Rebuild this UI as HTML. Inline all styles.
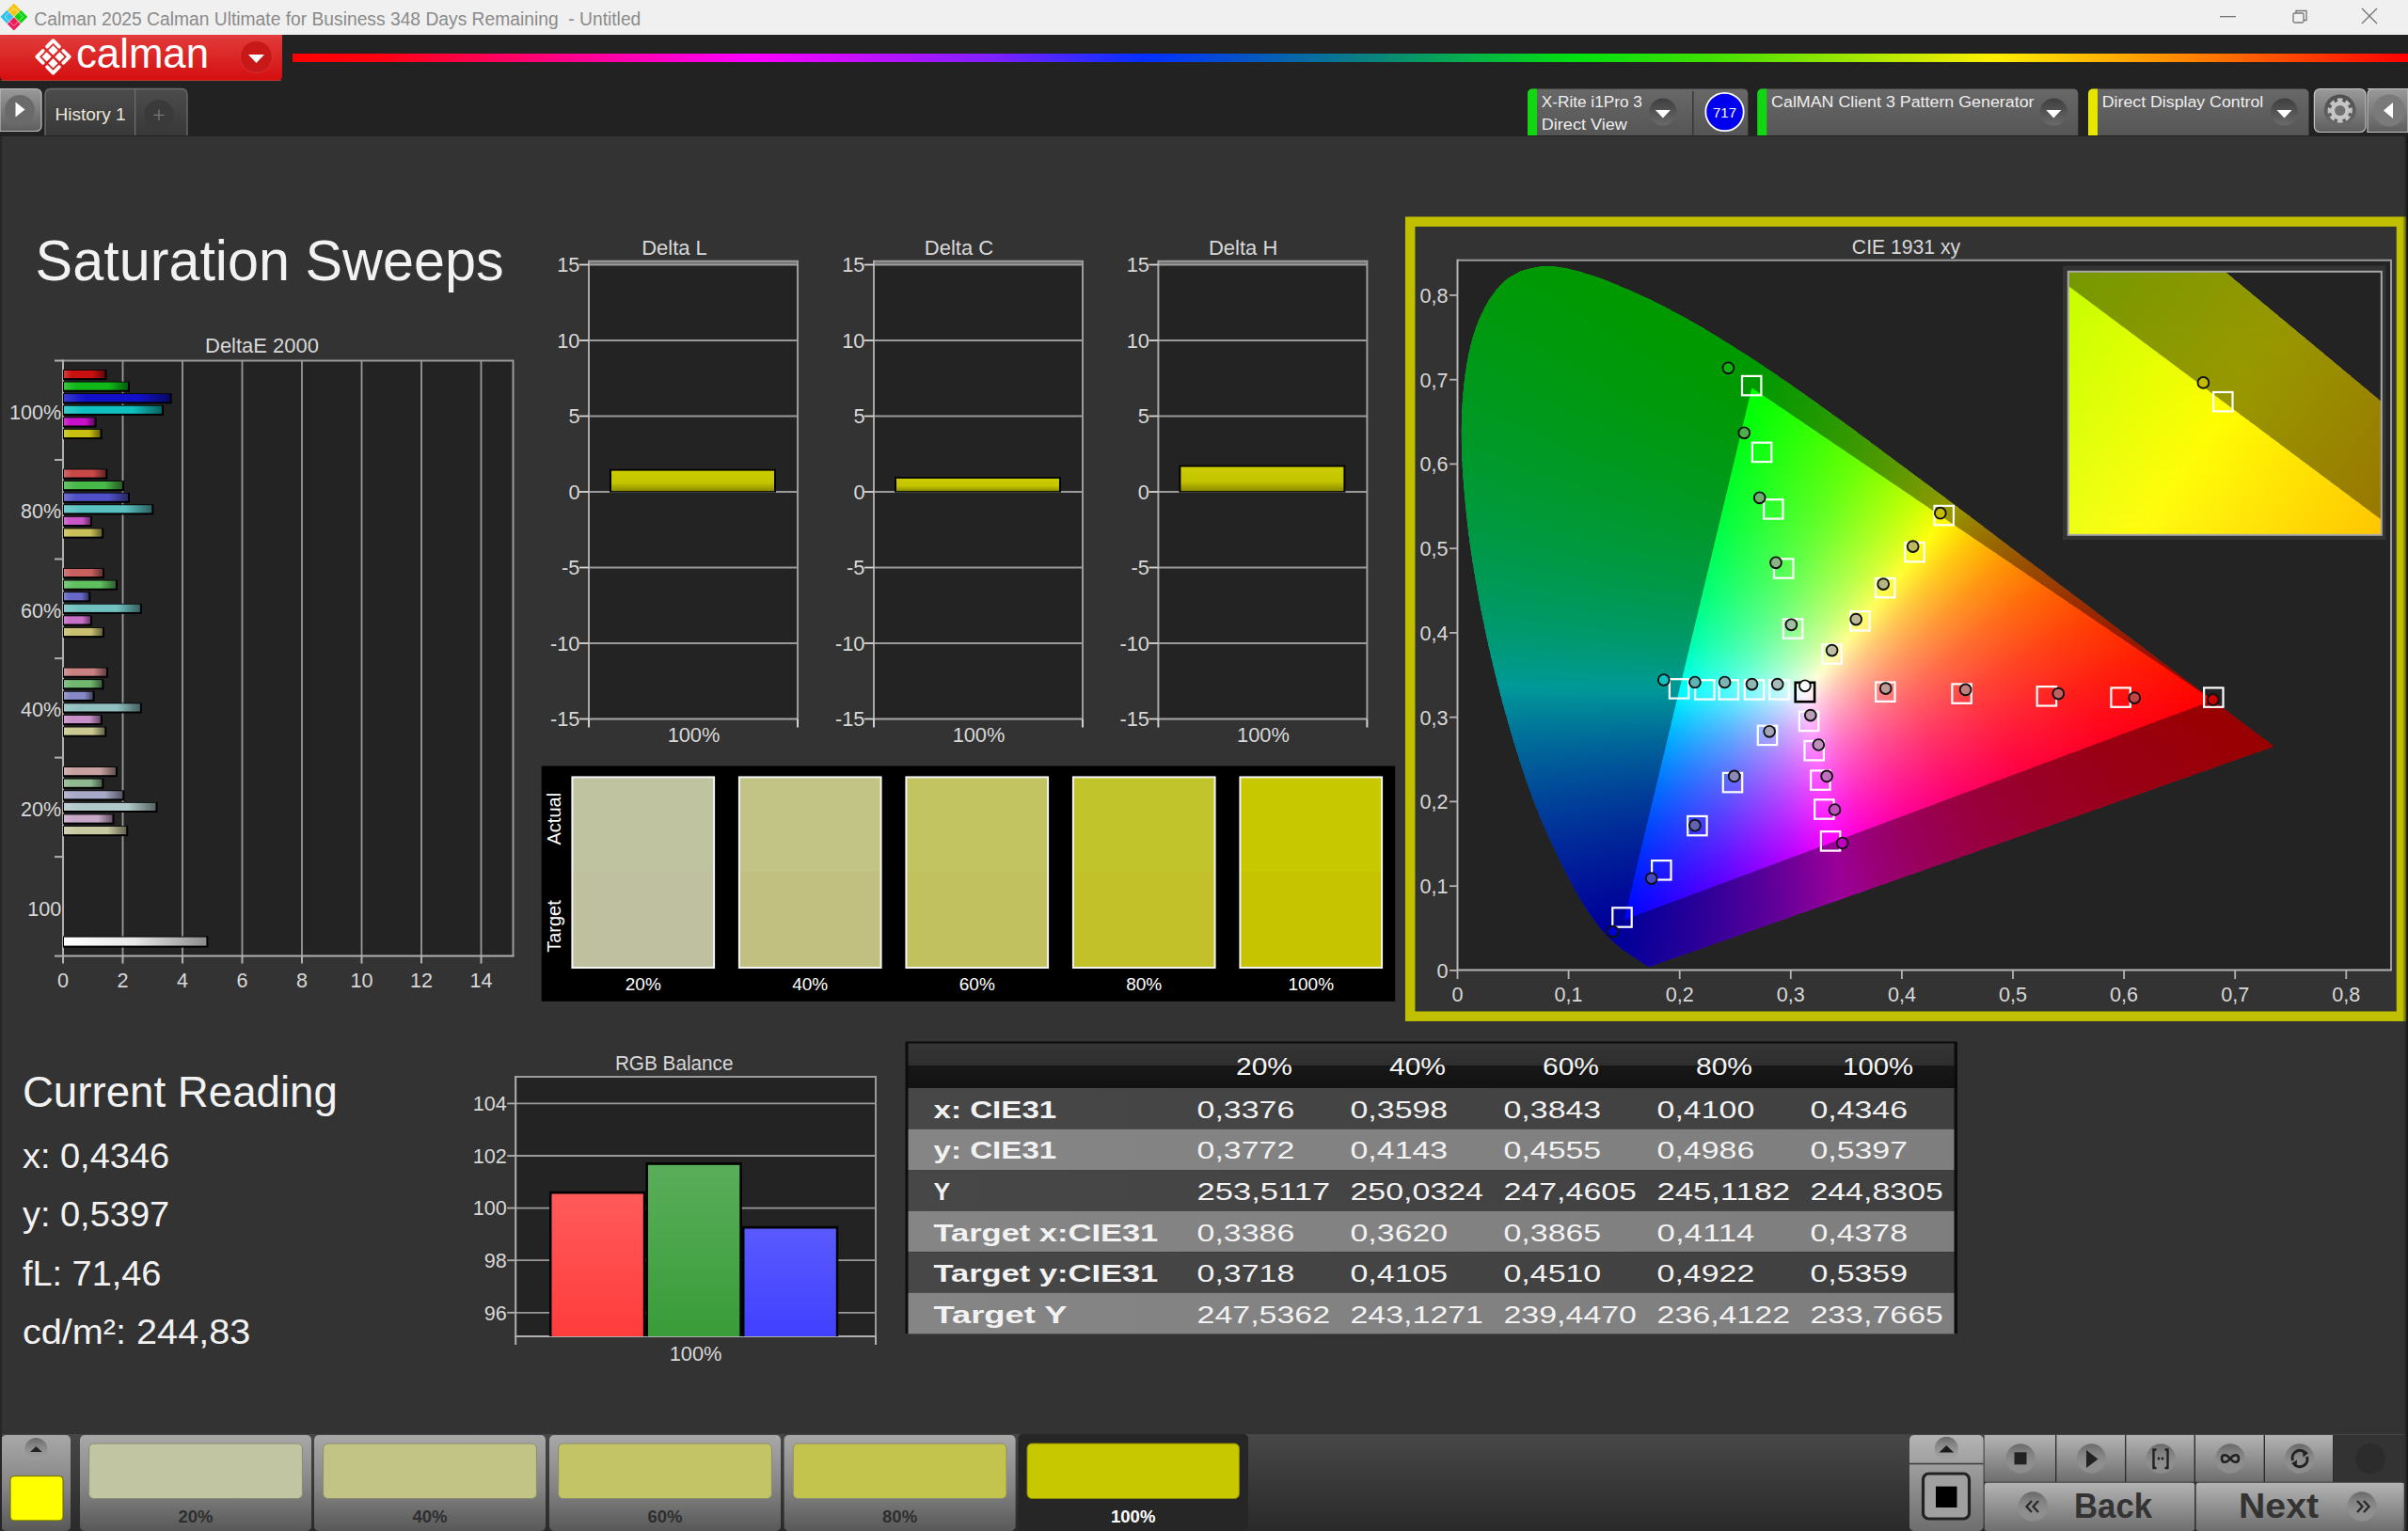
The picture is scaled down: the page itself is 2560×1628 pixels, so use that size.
<!DOCTYPE html><html><head><meta charset="utf-8"><title>Calman</title><style>html,body{margin:0;padding:0;background:#333;overflow:hidden}svg{display:block}text{font-family:"Liberation Sans",sans-serif}</style></head><body>
<svg width="2560" height="1628" viewBox="0 0 2560 1628">
<defs>
<linearGradient id="rainbow" x1="311" y1="0" x2="2560" y2="0" gradientUnits="userSpaceOnUse">
<stop offset="0" stop-color="#ff0000"/><stop offset="0.04" stop-color="#ff0010"/>
<stop offset="0.216" stop-color="#ff00ff"/><stop offset="0.33" stop-color="#8020ff"/>
<stop offset="0.404" stop-color="#0030ff"/><stop offset="0.50" stop-color="#0a7a8a"/>
<stop offset="0.605" stop-color="#00e010"/><stop offset="0.67" stop-color="#40e000"/>
<stop offset="0.805" stop-color="#ffee00"/><stop offset="0.90" stop-color="#ff8000"/>
<stop offset="1" stop-color="#ff0000"/></linearGradient>
<linearGradient id="redbtn" x1="0" y1="0" x2="0" y2="1"><stop offset="0" stop-color="#e23c3c"/><stop offset="1" stop-color="#d40e0e"/></linearGradient>
<linearGradient id="graybtn" x1="0" y1="0" x2="0" y2="1"><stop offset="0" stop-color="#9a9a9a"/><stop offset="1" stop-color="#5e5e5e"/></linearGradient>
<linearGradient id="tabg" x1="0" y1="0" x2="0" y2="1"><stop offset="0" stop-color="#4c4c4c"/><stop offset="1" stop-color="#383838"/></linearGradient>
<linearGradient id="devbox" x1="0" y1="0" x2="0" y2="1"><stop offset="0" stop-color="#686868"/><stop offset="1" stop-color="#555555"/></linearGradient>
<radialGradient id="ddcirc" cx="0.5" cy="0.5" r="0.5"><stop offset="0" stop-color="#5a5a5a"/><stop offset="1" stop-color="#505050"/></radialGradient>
<linearGradient id="ddcircl" x1="0" y1="0" x2="0" y2="1"><stop offset="0" stop-color="#3e3e3e"/><stop offset="1" stop-color="#6a6a6a"/></linearGradient>
<linearGradient id="barY" x1="0" y1="0" x2="0" y2="1"><stop offset="0" stop-color="#cccc00"/><stop offset="0.6" stop-color="#c4c400"/><stop offset="1" stop-color="#8a8a00"/></linearGradient>
<linearGradient id="hdrg" x1="0" y1="0" x2="0" y2="1"><stop offset="0" stop-color="#353535"/><stop offset="0.5" stop-color="#2e2e2e"/><stop offset="0.5" stop-color="#171717"/><stop offset="1" stop-color="#121212"/></linearGradient>
<linearGradient id="rowD" x1="0" y1="0" x2="1" y2="0"><stop offset="0" stop-color="#474747"/><stop offset="1" stop-color="#404040"/></linearGradient>
<linearGradient id="rowL" x1="0" y1="0" x2="1" y2="0"><stop offset="0" stop-color="#858585"/><stop offset="1" stop-color="#7e7e7e"/></linearGradient>
<linearGradient id="botbar" x1="0" y1="0" x2="0" y2="1"><stop offset="0" stop-color="#474747"/><stop offset="1" stop-color="#2a2a2a"/></linearGradient>
<linearGradient id="pbtn" x1="0" y1="0" x2="0" y2="1"><stop offset="0" stop-color="#a8a8a8"/><stop offset="0.55" stop-color="#848484"/><stop offset="1" stop-color="#585858"/></linearGradient>
<linearGradient id="cgrad" x1="0" y1="0" x2="0" y2="1"><stop offset="0" stop-color="#686868"/><stop offset="1" stop-color="#a4a4a4" stop-opacity="0.4"/></linearGradient>
<linearGradient id="cbtn" x1="0" y1="0" x2="0" y2="1"><stop offset="0" stop-color="#b4b4b4"/><stop offset="1" stop-color="#6e6e6e"/></linearGradient>
<linearGradient id="rgbR" x1="0" y1="0" x2="0" y2="1"><stop offset="0" stop-color="#ff5a5a"/><stop offset="1" stop-color="#ff3c3c"/></linearGradient>
<linearGradient id="rgbG" x1="0" y1="0" x2="0" y2="1"><stop offset="0" stop-color="#5aae5a"/><stop offset="1" stop-color="#389c38"/></linearGradient>
<linearGradient id="rgbB" x1="0" y1="0" x2="0" y2="1"><stop offset="0" stop-color="#5a5aff"/><stop offset="1" stop-color="#4040ff"/></linearGradient>

</defs>
<rect x="0" y="0" width="2560" height="1628" fill="#333333"/>
<rect x="0" y="37" width="2560" height="108" fill="#222222"/>
<rect x="0" y="0" width="2560" height="37" fill="#f0f0f0"/>
<path d="M14.9 4.3999999999999995 L21.1 10.6 L14.9 16.8 L8.7 10.6 Z" fill="#f7c512" stroke="#f7c512" stroke-width="1.2" stroke-linejoin="round"/>
<path d="M19.4 12.9 L14.9 8.4 L10.4 12.9" fill="none" stroke="#ffffff" stroke-width="1" opacity="0.55"/>
<path d="M7.4 11.7 L13.600000000000001 17.9 L7.4 24.099999999999998 L1.2000000000000002 17.9 Z" fill="#35c0f0" stroke="#35c0f0" stroke-width="1.2" stroke-linejoin="round"/>
<path d="M9.7 13.4 L5.2 17.9 L9.7 22.4" fill="none" stroke="#ffffff" stroke-width="1" opacity="0.55"/>
<path d="M22.3 11.7 L28.5 17.9 L22.3 24.099999999999998 L16.1 17.9 Z" fill="#12d212" stroke="#12d212" stroke-width="1.2" stroke-linejoin="round"/>
<path d="M20.0 22.4 L24.5 17.9 L20.0 13.4" fill="none" stroke="#ffffff" stroke-width="1" opacity="0.55"/>
<path d="M14.8 19.2 L21.0 25.4 L14.8 31.599999999999998 L8.600000000000001 25.4 Z" fill="#ee1a5a" stroke="#ee1a5a" stroke-width="1.2" stroke-linejoin="round"/>
<path d="M10.3 23.1 L14.8 27.6 L19.3 23.1" fill="none" stroke="#ffffff" stroke-width="1" opacity="0.55"/>
<text x="36.3" y="26.7" font-size="20.5" fill="#8a8a8a" textLength="645" lengthAdjust="spacingAndGlyphs" xml:space="preserve">Calman 2025 Calman Ultimate for Business 348 Days Remaining  - Untitled</text>
<rect x="2360" y="17" width="17" height="1.3" fill="#777"/>
<rect x="2438" y="14" width="11" height="10" fill="none" stroke="#777" stroke-width="1.3" rx="1.5"/>
<path d="M2441 14 V11.5 H2452 V21.5 H2449" fill="none" stroke="#777" stroke-width="1.3"/>
<path d="M2511 9 L2527 25 M2527 9 L2511 25" stroke="#777" stroke-width="1.4"/>
<path d="M0 37 H300 V80 Q300 86 294 86 H6 Q0 86 0 80 Z" fill="url(#redbtn)"/>
<path d="M1 85.5 H299" stroke="#b85050" stroke-width="1" opacity="0.6"/>
<path d="M50.1 49.6 L56.5 43.2 L62.9 49.6" fill="none" stroke="#fff" stroke-width="3.8" stroke-linecap="round" stroke-linejoin="round"/>
<path d="M67.3 54.0 L73.7 60.4 L67.3 66.8" fill="none" stroke="#fff" stroke-width="3.8" stroke-linecap="round" stroke-linejoin="round"/>
<path d="M62.9 71.2 L56.5 77.6 L50.1 71.2" fill="none" stroke="#fff" stroke-width="3.8" stroke-linecap="round" stroke-linejoin="round"/>
<path d="M45.7 66.8 L39.3 60.4 L45.7 54.0" fill="none" stroke="#fff" stroke-width="3.8" stroke-linecap="round" stroke-linejoin="round"/>
<path d="M56.5 49.2 L60.8 53.5 L56.5 57.8 L52.2 53.5 Z" fill="#fff" stroke="#fff" stroke-width="1.2" stroke-linejoin="round"/>
<path d="M49.6 56.1 L53.9 60.4 L49.6 64.7 L45.3 60.4 Z" fill="#fff" stroke="#fff" stroke-width="1.2" stroke-linejoin="round"/>
<path d="M63.4 56.1 L67.7 60.4 L63.4 64.7 L59.1 60.4 Z" fill="#fff" stroke="#fff" stroke-width="1.2" stroke-linejoin="round"/>
<path d="M56.5 63.0 L60.8 67.3 L56.5 71.6 L52.2 67.3 Z" fill="#fff" stroke="#fff" stroke-width="1.2" stroke-linejoin="round"/>
<text x="81.0" y="71.8" font-size="43.5" fill="#ffffff" textLength="141" lengthAdjust="spacingAndGlyphs">calman</text>
<circle cx="272.4" cy="60.5" r="17" fill="#c91818"/>
<circle cx="272.4" cy="60.5" r="17" fill="none" stroke="#e04848" stroke-width="1" opacity="0.5"/>
<path d="M264 58 L281 58 L272.5 67 Z" fill="#fff"/>
<rect x="311" y="57" width="2249" height="9" fill="url(#rainbow)"/>
<path d="M0 94.5 H38 Q44 94.5 44 100.5 V133.5 Q44 139.5 38 139.5 H0 Z" fill="url(#graybtn)" stroke="#bdbdbd" stroke-width="1.2"/>
<circle cx="21" cy="117" r="16" fill="#6a6a6a"/>
<path d="M16.5 108.5 L26.5 116.5 L16.5 124.5 Z" fill="#fff"/>
<path d="M48 144 V100.5 Q48 94.5 54 94.5 H193 Q199 94.5 199 100.5 V144" fill="url(#tabg)" stroke="#6e6e6e" stroke-width="1.3"/>
<path d="M143.6 95 V144" stroke="#6e6e6e" stroke-width="1.3"/>
<text x="58.5" y="128.2" font-size="18.5" fill="#ece6da" textLength="75" lengthAdjust="spacingAndGlyphs">History 1</text>
<circle cx="169" cy="122.3" r="16" fill="#3a3a3a"/>
<path d="M169 116.5 V128 M163.3 122.3 H174.7" stroke="#777" stroke-width="1.3"/>
<path d="M1624 144 V100 Q1624 94.5 1629.5 94.5 H1852.8 Q1858.3 94.5 1858.3 100 V144 Z" fill="url(#devbox)"/>
<path d="M1624 144 V100 Q1624 94.5 1629.5 94.5 H1634 V144 Z" fill="#12d612"/>
<text x="1638.8" y="114.0" font-size="16.8" fill="#eeeeee" textLength="107" lengthAdjust="spacingAndGlyphs">X-Rite i1Pro 3</text>
<text x="1638.8" y="137.6" font-size="16.8" fill="#eeeeee" textLength="91" lengthAdjust="spacingAndGlyphs">Direct View</text>
<circle cx="1767.9" cy="119" r="14.5" fill="url(#ddcircl)"/>
<path d="M1759.9 117 H1775.9 L1767.9 125.6 Z" fill="#fff"/>
<path d="M1799.8 97 V144" stroke="#3a3a3a" stroke-width="1.6"/>
<circle cx="1833.5" cy="119" r="20.2" fill="#0000ee" stroke="#ffffff" stroke-width="1.8"/>
<text x="1833.5" y="125.0" font-size="15" fill="#ffffff" text-anchor="middle">717</text>
<path d="M1868.3 144 V100 Q1868.3 94.5 1873.8 94.5 H2203.8 Q2209.3 94.5 2209.3 100 V144 Z" fill="url(#devbox)"/>
<path d="M1868.3 144 V100 Q1868.3 94.5 1873.8 94.5 H1878.3 V144 Z" fill="#12d612"/>
<text x="1883.1" y="114.0" font-size="16.8" fill="#eeeeee" textLength="279.4" lengthAdjust="spacingAndGlyphs">CalMAN Client 3 Pattern Generator</text>
<circle cx="2183.3" cy="119" r="14.5" fill="url(#ddcircl)"/>
<path d="M2175.3 117 H2191.3 L2183.3 125.6 Z" fill="#fff"/>
<path d="M2220 144 V100 Q2220 94.5 2225.5 94.5 H2449.0 Q2454.5 94.5 2454.5 100 V144 Z" fill="url(#devbox)"/>
<path d="M2220 144 V100 Q2220 94.5 2225.5 94.5 H2230 V144 Z" fill="#e6e600"/>
<text x="2234.8" y="114.0" font-size="16.8" fill="#eeeeee" textLength="171.5" lengthAdjust="spacingAndGlyphs">Direct Display Control</text>
<circle cx="2428.5" cy="119" r="14.5" fill="url(#ddcircl)"/>
<path d="M2420.5 117 H2436.5 L2428.5 125.6 Z" fill="#fff"/>
<rect x="2460.4" y="94.5" width="54.6" height="46" rx="6" fill="url(#graybtn)" stroke="#c4c4c4" stroke-width="1.2"/>
<circle cx="2487.7" cy="117.5" r="17" fill="url(#ddcircl)" opacity="0.8"/>
<path d="M2500.2 114.8 L2500.2 120.2 L2497.2 119.1 L2495.5 123.1 L2498.4 124.5 L2494.7 128.2 L2493.3 125.3 L2489.3 127.0 L2490.4 130.0 L2485.0 130.0 L2486.1 127.0 L2482.1 125.3 L2480.7 128.2 L2477.0 124.5 L2479.9 123.1 L2478.2 119.1 L2475.2 120.2 L2475.2 114.8 L2478.2 115.9 L2479.9 111.9 L2477.0 110.5 L2480.7 106.8 L2482.1 109.7 L2486.1 108.0 L2485.0 105.0 L2490.4 105.0 L2489.3 108.0 L2493.3 109.7 L2494.7 106.8 L2498.4 110.5 L2495.5 111.9 L2497.2 115.9 Z" fill="#c6c6c6" stroke="#c6c6c6" stroke-width="1" stroke-linejoin="round"/>
<circle cx="2487.7" cy="117.5" r="5.6" fill="#707070"/>
<path d="M2517 94.5 H2560 V140.5 H2517 Q2517 140.5 2517 134 V101 Q2517 94.5 2523 94.5 Z" fill="url(#graybtn)" stroke="#c4c4c4" stroke-width="1.2"/>
<circle cx="2540" cy="117.5" r="17" fill="#7a7a7a"/>
<path d="M2544 109 L2534 117.5 L2544 126 Z" fill="#fff"/>
<text x="37.6" y="297.7" font-size="61" fill="#f2f2f2" textLength="498" lengthAdjust="spacingAndGlyphs">Saturation Sweeps</text>
<rect x="67" y="383.5" width="478.5" height="633.1" fill="#232323"/>
<path d="M130.5 383.5 V1016.6" stroke="#9a9a9a" stroke-width="1.8"/>
<path d="M194.0 383.5 V1016.6" stroke="#9a9a9a" stroke-width="1.8"/>
<path d="M257.5 383.5 V1016.6" stroke="#9a9a9a" stroke-width="1.8"/>
<path d="M321.0 383.5 V1016.6" stroke="#9a9a9a" stroke-width="1.8"/>
<path d="M384.5 383.5 V1016.6" stroke="#9a9a9a" stroke-width="1.8"/>
<path d="M448.0 383.5 V1016.6" stroke="#9a9a9a" stroke-width="1.8"/>
<path d="M511.5 383.5 V1016.6" stroke="#9a9a9a" stroke-width="1.8"/>
<path d="M67 383.5 H545.5 V1016.6" fill="none" stroke="#9a9a9a" stroke-width="2"/>
<path d="M67 382.5 V1016.6 H546.5" fill="none" stroke="#b0b0b0" stroke-width="2"/>
<path d="M58 383.5 H67" stroke="#b0b0b0" stroke-width="2"/>
<path d="M58 489.0 H67" stroke="#b0b0b0" stroke-width="2"/>
<path d="M58 594.5 H67" stroke="#b0b0b0" stroke-width="2"/>
<path d="M58 700.1 H67" stroke="#b0b0b0" stroke-width="2"/>
<path d="M58 805.6 H67" stroke="#b0b0b0" stroke-width="2"/>
<path d="M58 911.1 H67" stroke="#b0b0b0" stroke-width="2"/>
<path d="M58 1016.6 H67" stroke="#b0b0b0" stroke-width="2"/>
<path d="M67.0 1016.6 V1024.6" stroke="#b0b0b0" stroke-width="2"/>
<text x="67.0" y="1050.3" font-size="21.6" fill="#d8d8d8" text-anchor="middle">0</text>
<path d="M130.5 1016.6 V1024.6" stroke="#b0b0b0" stroke-width="2"/>
<text x="130.5" y="1050.3" font-size="21.6" fill="#d8d8d8" text-anchor="middle">2</text>
<path d="M194.0 1016.6 V1024.6" stroke="#b0b0b0" stroke-width="2"/>
<text x="194.0" y="1050.3" font-size="21.6" fill="#d8d8d8" text-anchor="middle">4</text>
<path d="M257.5 1016.6 V1024.6" stroke="#b0b0b0" stroke-width="2"/>
<text x="257.5" y="1050.3" font-size="21.6" fill="#d8d8d8" text-anchor="middle">6</text>
<path d="M321.0 1016.6 V1024.6" stroke="#b0b0b0" stroke-width="2"/>
<text x="321.0" y="1050.3" font-size="21.6" fill="#d8d8d8" text-anchor="middle">8</text>
<path d="M384.5 1016.6 V1024.6" stroke="#b0b0b0" stroke-width="2"/>
<text x="384.5" y="1050.3" font-size="21.6" fill="#d8d8d8" text-anchor="middle">10</text>
<path d="M448.0 1016.6 V1024.6" stroke="#b0b0b0" stroke-width="2"/>
<text x="448.0" y="1050.3" font-size="21.6" fill="#d8d8d8" text-anchor="middle">12</text>
<path d="M511.5 1016.6 V1024.6" stroke="#b0b0b0" stroke-width="2"/>
<text x="511.5" y="1050.3" font-size="21.6" fill="#d8d8d8" text-anchor="middle">14</text>
<text x="278.5" y="375.0" font-size="22.7" fill="#d8d8d8" text-anchor="middle" textLength="121" lengthAdjust="spacingAndGlyphs">DeltaE 2000</text>
<text x="65.3" y="445.5" font-size="21.6" fill="#d8d8d8" text-anchor="end">100%</text>
<text x="65.3" y="551.1" font-size="21.6" fill="#d8d8d8" text-anchor="end">80%</text>
<text x="65.3" y="656.7" font-size="21.6" fill="#d8d8d8" text-anchor="end">60%</text>
<text x="65.3" y="762.3" font-size="21.6" fill="#d8d8d8" text-anchor="end">40%</text>
<text x="65.3" y="867.9" font-size="21.6" fill="#d8d8d8" text-anchor="end">20%</text>
<text x="65.3" y="973.5" font-size="21.6" fill="#d8d8d8" text-anchor="end">100</text>
<rect x="67" y="393.1" width="46.5" height="11" fill="#000"/>
<rect x="68" y="393.9" width="43.5" height="8.2" fill="url(#db1)"/>
<rect x="67" y="405.7" width="71.0" height="11" fill="#000"/>
<rect x="68" y="406.5" width="68.0" height="8.2" fill="url(#db2)"/>
<rect x="67" y="418.3" width="115.6" height="11" fill="#000"/>
<rect x="68" y="419.1" width="112.6" height="8.2" fill="url(#db3)"/>
<rect x="67" y="430.9" width="107.0" height="11" fill="#000"/>
<rect x="68" y="431.7" width="104.0" height="8.2" fill="url(#db4)"/>
<rect x="67" y="443.5" width="35.5" height="11" fill="#000"/>
<rect x="68" y="444.3" width="32.5" height="8.2" fill="url(#db5)"/>
<rect x="67" y="456.1" width="41.6" height="11" fill="#000"/>
<rect x="68" y="456.9" width="38.6" height="8.2" fill="url(#db6)"/>
<rect x="67" y="498.6" width="47.3" height="11" fill="#000"/>
<rect x="68" y="499.4" width="44.3" height="8.2" fill="url(#db7)"/>
<rect x="67" y="511.2" width="65.0" height="11" fill="#000"/>
<rect x="68" y="512.0" width="62.0" height="8.2" fill="url(#db8)"/>
<rect x="67" y="523.8" width="71.0" height="11" fill="#000"/>
<rect x="68" y="524.6" width="68.0" height="8.2" fill="url(#db9)"/>
<rect x="67" y="536.4" width="96.3" height="11" fill="#000"/>
<rect x="68" y="537.2" width="93.3" height="8.2" fill="url(#db10)"/>
<rect x="67" y="549.0" width="31.0" height="11" fill="#000"/>
<rect x="68" y="549.8" width="28.0" height="8.2" fill="url(#db11)"/>
<rect x="67" y="561.6" width="43.2" height="11" fill="#000"/>
<rect x="68" y="562.4" width="40.2" height="8.2" fill="url(#db12)"/>
<rect x="67" y="604.1" width="44.0" height="11" fill="#000"/>
<rect x="68" y="604.9" width="41.0" height="8.2" fill="url(#db13)"/>
<rect x="67" y="616.7" width="58.0" height="11" fill="#000"/>
<rect x="68" y="617.5" width="55.0" height="8.2" fill="url(#db14)"/>
<rect x="67" y="629.3" width="29.3" height="11" fill="#000"/>
<rect x="68" y="630.1" width="26.3" height="8.2" fill="url(#db15)"/>
<rect x="67" y="641.9" width="83.9" height="11" fill="#000"/>
<rect x="68" y="642.7" width="80.9" height="8.2" fill="url(#db16)"/>
<rect x="67" y="654.5" width="31.0" height="11" fill="#000"/>
<rect x="68" y="655.3" width="28.0" height="8.2" fill="url(#db17)"/>
<rect x="67" y="667.1" width="44.0" height="11" fill="#000"/>
<rect x="68" y="667.9" width="41.0" height="8.2" fill="url(#db18)"/>
<rect x="67" y="709.7" width="48.0" height="11" fill="#000"/>
<rect x="68" y="710.5" width="45.0" height="8.2" fill="url(#db19)"/>
<rect x="67" y="722.3" width="43.4" height="11" fill="#000"/>
<rect x="68" y="723.1" width="40.4" height="8.2" fill="url(#db20)"/>
<rect x="67" y="734.9" width="33.6" height="11" fill="#000"/>
<rect x="68" y="735.7" width="30.6" height="8.2" fill="url(#db21)"/>
<rect x="67" y="747.5" width="83.9" height="11" fill="#000"/>
<rect x="68" y="748.3" width="80.9" height="8.2" fill="url(#db22)"/>
<rect x="67" y="760.1" width="41.8" height="11" fill="#000"/>
<rect x="68" y="760.9" width="38.8" height="8.2" fill="url(#db23)"/>
<rect x="67" y="772.7" width="46.3" height="11" fill="#000"/>
<rect x="68" y="773.5" width="43.3" height="8.2" fill="url(#db24)"/>
<rect x="67" y="815.2" width="58.0" height="11" fill="#000"/>
<rect x="68" y="816.0" width="55.0" height="8.2" fill="url(#db25)"/>
<rect x="67" y="827.8" width="43.4" height="11" fill="#000"/>
<rect x="68" y="828.6" width="40.4" height="8.2" fill="url(#db26)"/>
<rect x="67" y="840.4" width="65.3" height="11" fill="#000"/>
<rect x="68" y="841.2" width="62.3" height="8.2" fill="url(#db27)"/>
<rect x="67" y="853.0" width="100.5" height="11" fill="#000"/>
<rect x="68" y="853.8" width="97.5" height="8.2" fill="url(#db28)"/>
<rect x="67" y="865.6" width="54.5" height="11" fill="#000"/>
<rect x="68" y="866.4" width="51.5" height="8.2" fill="url(#db29)"/>
<rect x="67" y="878.2" width="69.2" height="11" fill="#000"/>
<rect x="68" y="879.0" width="66.2" height="8.2" fill="url(#db30)"/>
<rect x="67" y="995.6" width="154.4" height="12" fill="#000"/>
<rect x="68" y="996.6" width="151.4" height="9" fill="url(#dbgray)"/>
<defs><linearGradient id="db1" x1="0" y1="0" x2="1" y2="0"><stop offset="0" stop-color="#d13b3b"/><stop offset="0.2" stop-color="#c81010"/><stop offset="0.7" stop-color="#c81010"/><stop offset="1" stop-color="#640808"/></linearGradient><linearGradient id="db2" x1="0" y1="0" x2="1" y2="0"><stop offset="0" stop-color="#3bc441"/><stop offset="0.2" stop-color="#10b818"/><stop offset="0.7" stop-color="#10b818"/><stop offset="1" stop-color="#085c0c"/></linearGradient><linearGradient id="db3" x1="0" y1="0" x2="1" y2="0"><stop offset="0" stop-color="#3b3bd1"/><stop offset="0.2" stop-color="#1010c8"/><stop offset="0.7" stop-color="#1010c8"/><stop offset="1" stop-color="#080864"/></linearGradient><linearGradient id="db4" x1="0" y1="0" x2="1" y2="0"><stop offset="0" stop-color="#3bcbcb"/><stop offset="0.2" stop-color="#10c0c0"/><stop offset="0.7" stop-color="#10c0c0"/><stop offset="1" stop-color="#086060"/></linearGradient><linearGradient id="db5" x1="0" y1="0" x2="1" y2="0"><stop offset="0" stop-color="#d13bd1"/><stop offset="0.2" stop-color="#c810c8"/><stop offset="0.7" stop-color="#c810c8"/><stop offset="1" stop-color="#640864"/></linearGradient><linearGradient id="db6" x1="0" y1="0" x2="1" y2="0"><stop offset="0" stop-color="#d1cb3b"/><stop offset="0.2" stop-color="#c8c010"/><stop offset="0.7" stop-color="#c8c010"/><stop offset="1" stop-color="#646008"/></linearGradient><linearGradient id="db7" x1="0" y1="0" x2="1" y2="0"><stop offset="0" stop-color="#d16868"/><stop offset="0.2" stop-color="#c84848"/><stop offset="0.7" stop-color="#c84848"/><stop offset="1" stop-color="#642424"/></linearGradient><linearGradient id="db8" x1="0" y1="0" x2="1" y2="0"><stop offset="0" stop-color="#68c468"/><stop offset="0.2" stop-color="#48b848"/><stop offset="0.7" stop-color="#48b848"/><stop offset="1" stop-color="#245c24"/></linearGradient><linearGradient id="db9" x1="0" y1="0" x2="1" y2="0"><stop offset="0" stop-color="#6f6fd1"/><stop offset="0.2" stop-color="#5050c8"/><stop offset="0.7" stop-color="#5050c8"/><stop offset="1" stop-color="#282864"/></linearGradient><linearGradient id="db10" x1="0" y1="0" x2="1" y2="0"><stop offset="0" stop-color="#76cbcb"/><stop offset="0.2" stop-color="#58c0c0"/><stop offset="0.7" stop-color="#58c0c0"/><stop offset="1" stop-color="#2c6060"/></linearGradient><linearGradient id="db11" x1="0" y1="0" x2="1" y2="0"><stop offset="0" stop-color="#d176d1"/><stop offset="0.2" stop-color="#c858c8"/><stop offset="0.7" stop-color="#c858c8"/><stop offset="1" stop-color="#642c64"/></linearGradient><linearGradient id="db12" x1="0" y1="0" x2="1" y2="0"><stop offset="0" stop-color="#d1cb76"/><stop offset="0.2" stop-color="#c8c058"/><stop offset="0.7" stop-color="#c8c058"/><stop offset="1" stop-color="#64602c"/></linearGradient><linearGradient id="db13" x1="0" y1="0" x2="1" y2="0"><stop offset="0" stop-color="#d17c7c"/><stop offset="0.2" stop-color="#c86060"/><stop offset="0.7" stop-color="#c86060"/><stop offset="1" stop-color="#643030"/></linearGradient><linearGradient id="db14" x1="0" y1="0" x2="1" y2="0"><stop offset="0" stop-color="#7ccb7c"/><stop offset="0.2" stop-color="#60c060"/><stop offset="0.7" stop-color="#60c060"/><stop offset="1" stop-color="#306030"/></linearGradient><linearGradient id="db15" x1="0" y1="0" x2="1" y2="0"><stop offset="0" stop-color="#8383d1"/><stop offset="0.2" stop-color="#6868c8"/><stop offset="0.7" stop-color="#6868c8"/><stop offset="1" stop-color="#343464"/></linearGradient><linearGradient id="db16" x1="0" y1="0" x2="1" y2="0"><stop offset="0" stop-color="#89cbcb"/><stop offset="0.2" stop-color="#70c0c0"/><stop offset="0.7" stop-color="#70c0c0"/><stop offset="1" stop-color="#386060"/></linearGradient><linearGradient id="db17" x1="0" y1="0" x2="1" y2="0"><stop offset="0" stop-color="#d189d1"/><stop offset="0.2" stop-color="#c870c8"/><stop offset="0.7" stop-color="#c870c8"/><stop offset="1" stop-color="#643864"/></linearGradient><linearGradient id="db18" x1="0" y1="0" x2="1" y2="0"><stop offset="0" stop-color="#d1cb89"/><stop offset="0.2" stop-color="#c8c070"/><stop offset="0.7" stop-color="#c8c070"/><stop offset="1" stop-color="#646038"/></linearGradient><linearGradient id="db19" x1="0" y1="0" x2="1" y2="0"><stop offset="0" stop-color="#d19696"/><stop offset="0.2" stop-color="#c88080"/><stop offset="0.7" stop-color="#c88080"/><stop offset="1" stop-color="#644040"/></linearGradient><linearGradient id="db20" x1="0" y1="0" x2="1" y2="0"><stop offset="0" stop-color="#89c489"/><stop offset="0.2" stop-color="#70b870"/><stop offset="0.7" stop-color="#70b870"/><stop offset="1" stop-color="#385c38"/></linearGradient><linearGradient id="db21" x1="0" y1="0" x2="1" y2="0"><stop offset="0" stop-color="#9d9dd1"/><stop offset="0.2" stop-color="#8888c8"/><stop offset="0.7" stop-color="#8888c8"/><stop offset="1" stop-color="#444464"/></linearGradient><linearGradient id="db22" x1="0" y1="0" x2="1" y2="0"><stop offset="0" stop-color="#a3cbcb"/><stop offset="0.2" stop-color="#90c0c0"/><stop offset="0.7" stop-color="#90c0c0"/><stop offset="1" stop-color="#486060"/></linearGradient><linearGradient id="db23" x1="0" y1="0" x2="1" y2="0"><stop offset="0" stop-color="#d1a3d1"/><stop offset="0.2" stop-color="#c890c8"/><stop offset="0.7" stop-color="#c890c8"/><stop offset="1" stop-color="#644864"/></linearGradient><linearGradient id="db24" x1="0" y1="0" x2="1" y2="0"><stop offset="0" stop-color="#d1d1a3"/><stop offset="0.2" stop-color="#c8c890"/><stop offset="0.7" stop-color="#c8c890"/><stop offset="1" stop-color="#646448"/></linearGradient><linearGradient id="db25" x1="0" y1="0" x2="1" y2="0"><stop offset="0" stop-color="#d1b1b1"/><stop offset="0.2" stop-color="#c8a0a0"/><stop offset="0.7" stop-color="#c8a0a0"/><stop offset="1" stop-color="#645050"/></linearGradient><linearGradient id="db26" x1="0" y1="0" x2="1" y2="0"><stop offset="0" stop-color="#a3c4a3"/><stop offset="0.2" stop-color="#90b890"/><stop offset="0.7" stop-color="#90b890"/><stop offset="1" stop-color="#485c48"/></linearGradient><linearGradient id="db27" x1="0" y1="0" x2="1" y2="0"><stop offset="0" stop-color="#b7b7d1"/><stop offset="0.2" stop-color="#a8a8c8"/><stop offset="0.7" stop-color="#a8a8c8"/><stop offset="1" stop-color="#545464"/></linearGradient><linearGradient id="db28" x1="0" y1="0" x2="1" y2="0"><stop offset="0" stop-color="#bed1d1"/><stop offset="0.2" stop-color="#b0c8c8"/><stop offset="0.7" stop-color="#b0c8c8"/><stop offset="1" stop-color="#586464"/></linearGradient><linearGradient id="db29" x1="0" y1="0" x2="1" y2="0"><stop offset="0" stop-color="#d1b7d1"/><stop offset="0.2" stop-color="#c8a8c8"/><stop offset="0.7" stop-color="#c8a8c8"/><stop offset="1" stop-color="#645464"/></linearGradient><linearGradient id="db30" x1="0" y1="0" x2="1" y2="0"><stop offset="0" stop-color="#d1d1b1"/><stop offset="0.2" stop-color="#c8c8a0"/><stop offset="0.7" stop-color="#c8c8a0"/><stop offset="1" stop-color="#646450"/></linearGradient><linearGradient id="dbgray" x1="0" y1="0" x2="1" y2="0"><stop offset="0" stop-color="#ffffff"/><stop offset="0.5" stop-color="#e6e6e6"/><stop offset="1" stop-color="#8c8c8c"/></linearGradient></defs>
<rect x="626" y="277.8" width="222" height="486.8" fill="#232323"/>
<path d="M626 362.0 H848" stroke="#9a9a9a" stroke-width="1.8"/>
<path d="M626 442.5 H848" stroke="#9a9a9a" stroke-width="1.8"/>
<path d="M626 523.0 H848" stroke="#9a9a9a" stroke-width="1.8"/>
<path d="M626 603.5 H848" stroke="#9a9a9a" stroke-width="1.8"/>
<path d="M626 684.0 H848" stroke="#9a9a9a" stroke-width="1.8"/>
<rect x="626" y="277.8" width="222" height="3.7" fill="#6a6a6a"/>
<path d="M626 281.5 H848" stroke="#a0a0a0" stroke-width="1.8"/>
<path d="M626 277.8 H848 V764.6" fill="none" stroke="#9c9c9c" stroke-width="2"/>
<path d="M626 276.8 V764.6 H848" fill="none" stroke="#a8a8a8" stroke-width="2"/>
<path d="M616 281.5 H626" stroke="#d8d8d8" stroke-width="1.8"/>
<text x="616.5" y="289.3" font-size="21.8" fill="#d8d8d8" text-anchor="end">15</text>
<path d="M616 362.0 H626" stroke="#d8d8d8" stroke-width="1.8"/>
<text x="616.5" y="369.8" font-size="21.8" fill="#d8d8d8" text-anchor="end">10</text>
<path d="M616 442.5 H626" stroke="#d8d8d8" stroke-width="1.8"/>
<text x="616.5" y="450.3" font-size="21.8" fill="#d8d8d8" text-anchor="end">5</text>
<path d="M616 523.0 H626" stroke="#d8d8d8" stroke-width="1.8"/>
<text x="616.5" y="530.8" font-size="21.8" fill="#d8d8d8" text-anchor="end">0</text>
<path d="M616 603.5 H626" stroke="#d8d8d8" stroke-width="1.8"/>
<text x="616.5" y="611.3" font-size="21.8" fill="#d8d8d8" text-anchor="end">-5</text>
<path d="M616 684.0 H626" stroke="#d8d8d8" stroke-width="1.8"/>
<text x="616.5" y="691.8" font-size="21.8" fill="#d8d8d8" text-anchor="end">-10</text>
<path d="M616 764.5 H626" stroke="#d8d8d8" stroke-width="1.8"/>
<text x="616.5" y="772.3" font-size="21.8" fill="#d8d8d8" text-anchor="end">-15</text>
<path d="M626 764.6 V773.6 M848 764.6 V773.6" stroke="#d0d0d0" stroke-width="2"/>
<text x="717.0" y="271.0" font-size="22" fill="#d8d8d8" text-anchor="middle">Delta L</text>
<text x="737.5" y="789.2" font-size="21.8" fill="#d8d8d8" text-anchor="middle">100%</text>
<rect x="648.0" y="498.8" width="177" height="24.8" fill="#000"/>
<rect x="650.0" y="500.6" width="173" height="21.6" fill="url(#barY)"/>
<rect x="929" y="277.8" width="222" height="486.8" fill="#232323"/>
<path d="M929 362.0 H1151" stroke="#9a9a9a" stroke-width="1.8"/>
<path d="M929 442.5 H1151" stroke="#9a9a9a" stroke-width="1.8"/>
<path d="M929 523.0 H1151" stroke="#9a9a9a" stroke-width="1.8"/>
<path d="M929 603.5 H1151" stroke="#9a9a9a" stroke-width="1.8"/>
<path d="M929 684.0 H1151" stroke="#9a9a9a" stroke-width="1.8"/>
<rect x="929" y="277.8" width="222" height="3.7" fill="#6a6a6a"/>
<path d="M929 281.5 H1151" stroke="#a0a0a0" stroke-width="1.8"/>
<path d="M929 277.8 H1151 V764.6" fill="none" stroke="#9c9c9c" stroke-width="2"/>
<path d="M929 276.8 V764.6 H1151" fill="none" stroke="#a8a8a8" stroke-width="2"/>
<path d="M919 281.5 H929" stroke="#d8d8d8" stroke-width="1.8"/>
<text x="919.5" y="289.3" font-size="21.8" fill="#d8d8d8" text-anchor="end">15</text>
<path d="M919 362.0 H929" stroke="#d8d8d8" stroke-width="1.8"/>
<text x="919.5" y="369.8" font-size="21.8" fill="#d8d8d8" text-anchor="end">10</text>
<path d="M919 442.5 H929" stroke="#d8d8d8" stroke-width="1.8"/>
<text x="919.5" y="450.3" font-size="21.8" fill="#d8d8d8" text-anchor="end">5</text>
<path d="M919 523.0 H929" stroke="#d8d8d8" stroke-width="1.8"/>
<text x="919.5" y="530.8" font-size="21.8" fill="#d8d8d8" text-anchor="end">0</text>
<path d="M919 603.5 H929" stroke="#d8d8d8" stroke-width="1.8"/>
<text x="919.5" y="611.3" font-size="21.8" fill="#d8d8d8" text-anchor="end">-5</text>
<path d="M919 684.0 H929" stroke="#d8d8d8" stroke-width="1.8"/>
<text x="919.5" y="691.8" font-size="21.8" fill="#d8d8d8" text-anchor="end">-10</text>
<path d="M919 764.5 H929" stroke="#d8d8d8" stroke-width="1.8"/>
<text x="919.5" y="772.3" font-size="21.8" fill="#d8d8d8" text-anchor="end">-15</text>
<path d="M929 764.6 V773.6 M1151 764.6 V773.6" stroke="#d0d0d0" stroke-width="2"/>
<text x="1019.5" y="271.0" font-size="22" fill="#d8d8d8" text-anchor="middle">Delta C</text>
<text x="1040.5" y="789.2" font-size="21.8" fill="#d8d8d8" text-anchor="middle">100%</text>
<rect x="951.0" y="507.1" width="177" height="16.5" fill="#000"/>
<rect x="953.0" y="508.9" width="173" height="13.3" fill="url(#barY)"/>
<rect x="1231.4" y="277.8" width="222" height="486.8" fill="#232323"/>
<path d="M1231.4 362.0 H1453.4" stroke="#9a9a9a" stroke-width="1.8"/>
<path d="M1231.4 442.5 H1453.4" stroke="#9a9a9a" stroke-width="1.8"/>
<path d="M1231.4 523.0 H1453.4" stroke="#9a9a9a" stroke-width="1.8"/>
<path d="M1231.4 603.5 H1453.4" stroke="#9a9a9a" stroke-width="1.8"/>
<path d="M1231.4 684.0 H1453.4" stroke="#9a9a9a" stroke-width="1.8"/>
<rect x="1231.4" y="277.8" width="222" height="3.7" fill="#6a6a6a"/>
<path d="M1231.4 281.5 H1453.4" stroke="#a0a0a0" stroke-width="1.8"/>
<path d="M1231.4 277.8 H1453.4 V764.6" fill="none" stroke="#9c9c9c" stroke-width="2"/>
<path d="M1231.4 276.8 V764.6 H1453.4" fill="none" stroke="#a8a8a8" stroke-width="2"/>
<path d="M1221.4 281.5 H1231.4" stroke="#d8d8d8" stroke-width="1.8"/>
<text x="1221.9" y="289.3" font-size="21.8" fill="#d8d8d8" text-anchor="end">15</text>
<path d="M1221.4 362.0 H1231.4" stroke="#d8d8d8" stroke-width="1.8"/>
<text x="1221.9" y="369.8" font-size="21.8" fill="#d8d8d8" text-anchor="end">10</text>
<path d="M1221.4 442.5 H1231.4" stroke="#d8d8d8" stroke-width="1.8"/>
<text x="1221.9" y="450.3" font-size="21.8" fill="#d8d8d8" text-anchor="end">5</text>
<path d="M1221.4 523.0 H1231.4" stroke="#d8d8d8" stroke-width="1.8"/>
<text x="1221.9" y="530.8" font-size="21.8" fill="#d8d8d8" text-anchor="end">0</text>
<path d="M1221.4 603.5 H1231.4" stroke="#d8d8d8" stroke-width="1.8"/>
<text x="1221.9" y="611.3" font-size="21.8" fill="#d8d8d8" text-anchor="end">-5</text>
<path d="M1221.4 684.0 H1231.4" stroke="#d8d8d8" stroke-width="1.8"/>
<text x="1221.9" y="691.8" font-size="21.8" fill="#d8d8d8" text-anchor="end">-10</text>
<path d="M1221.4 764.5 H1231.4" stroke="#d8d8d8" stroke-width="1.8"/>
<text x="1221.9" y="772.3" font-size="21.8" fill="#d8d8d8" text-anchor="end">-15</text>
<path d="M1231.4 764.6 V773.6 M1453.4 764.6 V773.6" stroke="#d0d0d0" stroke-width="2"/>
<text x="1321.6" y="271.0" font-size="22" fill="#d8d8d8" text-anchor="middle">Delta H</text>
<text x="1342.9" y="789.2" font-size="21.8" fill="#d8d8d8" text-anchor="middle">100%</text>
<rect x="1253.4" y="494.7" width="177" height="28.9" fill="#000"/>
<rect x="1255.4" y="496.5" width="173" height="25.7" fill="url(#barY)"/>
<rect x="575.7" y="814.5" width="907.5" height="250.3" fill="#000"/>
<rect x="608.4" y="826.4" width="150.7" height="202.6" fill="#c0c3a0"/>
<rect x="608.4" y="927" width="150.7" height="102" fill="#bfc0a0" shape-rendering="crispEdges"/>
<rect x="608.4" y="826.4" width="150.7" height="202.6" fill="none" stroke="#f4f4f4" stroke-width="2"/>
<text x="683.8" y="1053.3" font-size="19" fill="#ffffff" text-anchor="middle">20%</text>
<rect x="785.9" y="826.4" width="150.7" height="202.6" fill="#c1c484"/>
<rect x="785.9" y="927" width="150.7" height="102" fill="#c2c080" shape-rendering="crispEdges"/>
<rect x="785.9" y="826.4" width="150.7" height="202.6" fill="none" stroke="#f4f4f4" stroke-width="2"/>
<text x="861.2" y="1053.3" font-size="19" fill="#ffffff" text-anchor="middle">40%</text>
<rect x="963.4" y="826.4" width="150.7" height="202.6" fill="#c2c462"/>
<rect x="963.4" y="927" width="150.7" height="102" fill="#c2c160" shape-rendering="crispEdges"/>
<rect x="963.4" y="826.4" width="150.7" height="202.6" fill="none" stroke="#f4f4f4" stroke-width="2"/>
<text x="1038.8" y="1053.3" font-size="19" fill="#ffffff" text-anchor="middle">60%</text>
<rect x="1140.9" y="826.4" width="150.7" height="202.6" fill="#c2c42c"/>
<rect x="1140.9" y="927" width="150.7" height="102" fill="#c3c12a" shape-rendering="crispEdges"/>
<rect x="1140.9" y="826.4" width="150.7" height="202.6" fill="none" stroke="#f4f4f4" stroke-width="2"/>
<text x="1216.2" y="1053.3" font-size="19" fill="#ffffff" text-anchor="middle">80%</text>
<rect x="1318.4" y="826.4" width="150.7" height="202.6" fill="#c8c800"/>
<rect x="1318.4" y="927" width="150.7" height="102" fill="#c6c400" shape-rendering="crispEdges"/>
<rect x="1318.4" y="826.4" width="150.7" height="202.6" fill="none" stroke="#f4f4f4" stroke-width="2"/>
<text x="1393.8" y="1053.3" font-size="19" fill="#ffffff" text-anchor="middle">100%</text>
<text transform="translate(596,870.7) rotate(-90)" font-size="20" fill="#fff" text-anchor="middle">Actual</text>
<text transform="translate(596,985) rotate(-90)" font-size="20" fill="#fff" text-anchor="middle">Target</text>
<rect x="1499.2" y="235.7" width="1053.8" height="845" fill="none" stroke="#c0c000" stroke-width="10.5"/>
<rect x="1549.5" y="276.8" width="992.5" height="754.7" fill="#232323"/>
<defs>
<linearGradient id="vramp" x1="0" y1="0" x2="0" y2="1"><stop offset="0" stop-color="#000"/><stop offset="1" stop-color="#fff"/></linearGradient>
<mask id="ramp" maskContentUnits="objectBoundingBox"><rect width="1" height="1" fill="url(#vramp)"/></mask>
<linearGradient id="fm0" gradientUnits="userSpaceOnUse" x1="1550" y1="0" x2="2420" y2="0"><stop offset="0.0000" stop-color="#00ff10"/><stop offset="0.1586" stop-color="#00ff00"/><stop offset="0.4000" stop-color="#02ff00"/><stop offset="0.5931" stop-color="#61ff00"/><stop offset="0.7586" stop-color="#c5ff00"/><stop offset="0.8437" stop-color="#fffd00"/><stop offset="0.9333" stop-color="#ffc700"/><stop offset="1.0000" stop-color="#ffa800"/></linearGradient><linearGradient id="fm1" gradientUnits="userSpaceOnUse" x1="1550" y1="0" x2="2420" y2="0"><stop offset="0.0000" stop-color="#00ff12"/><stop offset="0.1747" stop-color="#00ff00"/><stop offset="0.3977" stop-color="#02ff00"/><stop offset="0.5885" stop-color="#61ff00"/><stop offset="0.7517" stop-color="#c5ff00"/><stop offset="0.8345" stop-color="#fffe00"/><stop offset="0.9218" stop-color="#ffc700"/><stop offset="1.0000" stop-color="#ffa400"/></linearGradient><linearGradient id="fm2" gradientUnits="userSpaceOnUse" x1="1550" y1="0" x2="2420" y2="0"><stop offset="0.0000" stop-color="#00ff14"/><stop offset="0.1908" stop-color="#00ff00"/><stop offset="0.3954" stop-color="#02ff00"/><stop offset="0.5816" stop-color="#61ff00"/><stop offset="0.7425" stop-color="#c5ff00"/><stop offset="0.8253" stop-color="#fffe00"/><stop offset="0.9103" stop-color="#ffc800"/><stop offset="1.0000" stop-color="#ff9f00"/></linearGradient><linearGradient id="fm3" gradientUnits="userSpaceOnUse" x1="1550" y1="0" x2="2420" y2="0"><stop offset="0.0000" stop-color="#00ff17"/><stop offset="0.2069" stop-color="#00ff00"/><stop offset="0.3908" stop-color="#02ff00"/><stop offset="0.5747" stop-color="#60ff00"/><stop offset="0.7333" stop-color="#c4ff00"/><stop offset="0.8161" stop-color="#fffe00"/><stop offset="0.9011" stop-color="#ffc700"/><stop offset="1.0000" stop-color="#ff9b00"/></linearGradient><linearGradient id="fm4" gradientUnits="userSpaceOnUse" x1="1550" y1="0" x2="2420" y2="0"><stop offset="0.0000" stop-color="#00ff19"/><stop offset="0.2230" stop-color="#00ff00"/><stop offset="0.3885" stop-color="#02ff00"/><stop offset="0.5701" stop-color="#61ff00"/><stop offset="0.7264" stop-color="#c4ff00"/><stop offset="0.8069" stop-color="#fffe00"/><stop offset="0.8897" stop-color="#ffc800"/><stop offset="1.0000" stop-color="#ff9600"/></linearGradient><linearGradient id="fm5" gradientUnits="userSpaceOnUse" x1="1550" y1="0" x2="2420" y2="0"><stop offset="0.0000" stop-color="#00ff1b"/><stop offset="0.2391" stop-color="#00ff00"/><stop offset="0.3862" stop-color="#02ff00"/><stop offset="0.5655" stop-color="#61ff00"/><stop offset="0.7195" stop-color="#c5ff00"/><stop offset="0.7977" stop-color="#fffe00"/><stop offset="0.8805" stop-color="#ffc700"/><stop offset="0.9908" stop-color="#ff9500"/><stop offset="1.0000" stop-color="#ff9200"/></linearGradient><linearGradient id="fm6" gradientUnits="userSpaceOnUse" x1="1550" y1="0" x2="2420" y2="0"><stop offset="0.0000" stop-color="#00ff1e"/><stop offset="0.2575" stop-color="#00ff00"/><stop offset="0.3839" stop-color="#02ff00"/><stop offset="0.5609" stop-color="#62ff00"/><stop offset="0.7126" stop-color="#c6ff00"/><stop offset="0.7885" stop-color="#fffe00"/><stop offset="0.8690" stop-color="#ffc800"/><stop offset="0.9770" stop-color="#ff9600"/><stop offset="1.0000" stop-color="#ff8e00"/></linearGradient><linearGradient id="fm7" gradientUnits="userSpaceOnUse" x1="1550" y1="0" x2="2420" y2="0"><stop offset="0.0000" stop-color="#00ff21"/><stop offset="0.2736" stop-color="#00ff00"/><stop offset="0.3816" stop-color="#03ff00"/><stop offset="0.5540" stop-color="#61ff00"/><stop offset="0.7034" stop-color="#c5ff00"/><stop offset="0.7793" stop-color="#fffe00"/><stop offset="0.8598" stop-color="#ffc700"/><stop offset="0.9655" stop-color="#ff9600"/><stop offset="1.0000" stop-color="#ff8900"/></linearGradient><linearGradient id="fm8" gradientUnits="userSpaceOnUse" x1="1550" y1="0" x2="2420" y2="0"><stop offset="0.0000" stop-color="#00ff23"/><stop offset="0.2897" stop-color="#00ff00"/><stop offset="0.3770" stop-color="#02ff00"/><stop offset="0.5471" stop-color="#60ff00"/><stop offset="0.6943" stop-color="#c4ff00"/><stop offset="0.7701" stop-color="#fffe00"/><stop offset="0.8483" stop-color="#ffc700"/><stop offset="0.9517" stop-color="#ff9600"/><stop offset="1.0000" stop-color="#ff8500"/></linearGradient><linearGradient id="fm9" gradientUnits="userSpaceOnUse" x1="1550" y1="0" x2="2420" y2="0"><stop offset="0.0000" stop-color="#00ff26"/><stop offset="0.3057" stop-color="#00ff00"/><stop offset="0.3747" stop-color="#02ff00"/><stop offset="0.5425" stop-color="#61ff00"/><stop offset="0.6874" stop-color="#c5ff00"/><stop offset="0.7609" stop-color="#fffe00"/><stop offset="0.8368" stop-color="#ffc800"/><stop offset="0.9379" stop-color="#ff9700"/><stop offset="1.0000" stop-color="#ff8100"/></linearGradient><linearGradient id="fm10" gradientUnits="userSpaceOnUse" x1="1550" y1="0" x2="2420" y2="0"><stop offset="0.0000" stop-color="#00ff29"/><stop offset="0.3218" stop-color="#00ff00"/><stop offset="0.3724" stop-color="#02ff00"/><stop offset="0.5379" stop-color="#61ff00"/><stop offset="0.6805" stop-color="#c6ff00"/><stop offset="0.7517" stop-color="#fffe00"/><stop offset="0.8276" stop-color="#ffc700"/><stop offset="0.9287" stop-color="#ff9600"/><stop offset="1.0000" stop-color="#ff7c00"/></linearGradient><linearGradient id="fm11" gradientUnits="userSpaceOnUse" x1="1550" y1="0" x2="2420" y2="0"><stop offset="0.0000" stop-color="#00ff2c"/><stop offset="0.3402" stop-color="#00ff00"/><stop offset="0.3701" stop-color="#02ff00"/><stop offset="0.5333" stop-color="#62ff00"/><stop offset="0.6736" stop-color="#c7ff00"/><stop offset="0.7425" stop-color="#fffe00"/><stop offset="0.8161" stop-color="#ffc800"/><stop offset="0.9149" stop-color="#ff9700"/><stop offset="1.0000" stop-color="#ff7800"/></linearGradient><linearGradient id="fm12" gradientUnits="userSpaceOnUse" x1="1550" y1="0" x2="2420" y2="0"><stop offset="0.0000" stop-color="#00ff2f"/><stop offset="0.3563" stop-color="#00ff00"/><stop offset="0.3816" stop-color="#0aff00"/><stop offset="0.5379" stop-color="#69ff00"/><stop offset="0.6736" stop-color="#cdff00"/><stop offset="0.7333" stop-color="#fffe00"/><stop offset="0.8069" stop-color="#ffc700"/><stop offset="0.9034" stop-color="#ff9600"/><stop offset="1.0000" stop-color="#ff7400"/></linearGradient><linearGradient id="fm13" gradientUnits="userSpaceOnUse" x1="1550" y1="0" x2="2420" y2="0"><stop offset="0.0000" stop-color="#00ff32"/><stop offset="0.3632" stop-color="#02ff00"/><stop offset="0.5195" stop-color="#60ff00"/><stop offset="0.6552" stop-color="#c5ff00"/><stop offset="0.7241" stop-color="#fffe00"/><stop offset="0.7954" stop-color="#ffc800"/><stop offset="0.8920" stop-color="#ff9600"/><stop offset="1.0000" stop-color="#ff7000"/></linearGradient><linearGradient id="fm14" gradientUnits="userSpaceOnUse" x1="1550" y1="0" x2="2420" y2="0"><stop offset="0.0000" stop-color="#00ff35"/><stop offset="0.3494" stop-color="#00ff04"/><stop offset="0.3701" stop-color="#07ff00"/><stop offset="0.5218" stop-color="#66ff00"/><stop offset="0.6529" stop-color="#c9ff00"/><stop offset="0.7149" stop-color="#fffe00"/><stop offset="0.7862" stop-color="#ffc700"/><stop offset="0.8805" stop-color="#ff9600"/><stop offset="1.0000" stop-color="#ff6c00"/></linearGradient><linearGradient id="fm15" gradientUnits="userSpaceOnUse" x1="1550" y1="0" x2="2420" y2="0"><stop offset="0.0000" stop-color="#00ff39"/><stop offset="0.3471" stop-color="#00ff07"/><stop offset="0.3655" stop-color="#06ff04"/><stop offset="0.4230" stop-color="#28ff00"/><stop offset="0.5655" stop-color="#8aff00"/><stop offset="0.6874" stop-color="#efff00"/><stop offset="0.7057" stop-color="#fffe00"/><stop offset="0.7747" stop-color="#ffc800"/><stop offset="0.8667" stop-color="#ff9600"/><stop offset="0.9931" stop-color="#ff6a00"/><stop offset="1.0000" stop-color="#ff6800"/></linearGradient><linearGradient id="fm16" gradientUnits="userSpaceOnUse" x1="1550" y1="0" x2="2420" y2="0"><stop offset="0.0000" stop-color="#00ff3c"/><stop offset="0.3425" stop-color="#00ff0b"/><stop offset="0.3586" stop-color="#04ff09"/><stop offset="0.4253" stop-color="#2cff00"/><stop offset="0.5632" stop-color="#8dff00"/><stop offset="0.6828" stop-color="#f3ff00"/><stop offset="0.6989" stop-color="#fffc00"/><stop offset="0.7678" stop-color="#ffc500"/><stop offset="0.8598" stop-color="#ff9400"/><stop offset="0.9862" stop-color="#ff6800"/><stop offset="1.0000" stop-color="#ff6400"/></linearGradient><linearGradient id="fm17" gradientUnits="userSpaceOnUse" x1="1550" y1="0" x2="2420" y2="0"><stop offset="0.0000" stop-color="#00ff40"/><stop offset="0.3402" stop-color="#00ff0f"/><stop offset="0.3563" stop-color="#04ff0c"/><stop offset="0.4391" stop-color="#38ff00"/><stop offset="0.5724" stop-color="#9aff00"/><stop offset="0.6874" stop-color="#fffe00"/><stop offset="0.7540" stop-color="#ffc800"/><stop offset="0.8437" stop-color="#ff9600"/><stop offset="0.9655" stop-color="#ff6900"/><stop offset="1.0000" stop-color="#ff6000"/></linearGradient><linearGradient id="fm18" gradientUnits="userSpaceOnUse" x1="1550" y1="0" x2="2420" y2="0"><stop offset="0.0000" stop-color="#00ff43"/><stop offset="0.3379" stop-color="#00ff13"/><stop offset="0.3563" stop-color="#06ff10"/><stop offset="0.4552" stop-color="#46ff00"/><stop offset="0.5839" stop-color="#a9ff00"/><stop offset="0.6782" stop-color="#fffe00"/><stop offset="0.7425" stop-color="#ffc800"/><stop offset="0.8299" stop-color="#ff9700"/><stop offset="0.9494" stop-color="#ff6a00"/><stop offset="1.0000" stop-color="#ff5c00"/></linearGradient><linearGradient id="fm19" gradientUnits="userSpaceOnUse" x1="1550" y1="0" x2="2420" y2="0"><stop offset="0.0000" stop-color="#00ff47"/><stop offset="0.3333" stop-color="#00ff18"/><stop offset="0.3494" stop-color="#04ff15"/><stop offset="0.4713" stop-color="#55ff00"/><stop offset="0.5931" stop-color="#b8ff00"/><stop offset="0.6690" stop-color="#fffe00"/><stop offset="0.7333" stop-color="#ffc800"/><stop offset="0.8184" stop-color="#ff9600"/><stop offset="0.9356" stop-color="#ff6a00"/><stop offset="1.0000" stop-color="#ff5800"/></linearGradient><linearGradient id="fm20" gradientUnits="userSpaceOnUse" x1="1550" y1="0" x2="2420" y2="0"><stop offset="0.0000" stop-color="#00ff4b"/><stop offset="0.3310" stop-color="#00ff1c"/><stop offset="0.3471" stop-color="#04ff19"/><stop offset="0.4851" stop-color="#64ff00"/><stop offset="0.6023" stop-color="#c7ff00"/><stop offset="0.6598" stop-color="#fffe00"/><stop offset="0.7218" stop-color="#ffc800"/><stop offset="0.8046" stop-color="#ff9700"/><stop offset="0.9195" stop-color="#ff6a00"/><stop offset="1.0000" stop-color="#ff5400"/></linearGradient><linearGradient id="fm21" gradientUnits="userSpaceOnUse" x1="1550" y1="0" x2="2420" y2="0"><stop offset="0.0000" stop-color="#00ff4f"/><stop offset="0.3287" stop-color="#00ff20"/><stop offset="0.3448" stop-color="#04ff1d"/><stop offset="0.4782" stop-color="#63ff03"/><stop offset="0.5931" stop-color="#c6ff00"/><stop offset="0.6506" stop-color="#fffe00"/><stop offset="0.7126" stop-color="#ffc700"/><stop offset="0.7954" stop-color="#ff9600"/><stop offset="0.9080" stop-color="#ff6900"/><stop offset="1.0000" stop-color="#ff5000"/></linearGradient><linearGradient id="fm22" gradientUnits="userSpaceOnUse" x1="1550" y1="0" x2="2420" y2="0"><stop offset="0.0000" stop-color="#00ff53"/><stop offset="0.3241" stop-color="#00ff25"/><stop offset="0.3402" stop-color="#03ff22"/><stop offset="0.4713" stop-color="#62ff08"/><stop offset="0.5218" stop-color="#8cff00"/><stop offset="0.6276" stop-color="#f1ff00"/><stop offset="0.6414" stop-color="#fffe00"/><stop offset="0.7011" stop-color="#ffc800"/><stop offset="0.7816" stop-color="#ff9700"/><stop offset="0.8920" stop-color="#ff6a00"/><stop offset="1.0000" stop-color="#ff4c00"/></linearGradient><linearGradient id="fm23" gradientUnits="userSpaceOnUse" x1="1550" y1="0" x2="2420" y2="0"><stop offset="0.0000" stop-color="#00ff58"/><stop offset="0.3218" stop-color="#00ff2a"/><stop offset="0.3379" stop-color="#04ff27"/><stop offset="0.4667" stop-color="#63ff0d"/><stop offset="0.5356" stop-color="#9fff00"/><stop offset="0.6322" stop-color="#fffe00"/><stop offset="0.6920" stop-color="#ffc700"/><stop offset="0.7701" stop-color="#ff9600"/><stop offset="0.8782" stop-color="#ff6a00"/><stop offset="1.0000" stop-color="#ff4900"/></linearGradient><linearGradient id="fm24" gradientUnits="userSpaceOnUse" x1="1550" y1="0" x2="2420" y2="0"><stop offset="0.0000" stop-color="#00ff5c"/><stop offset="0.3195" stop-color="#00ff2f"/><stop offset="0.3356" stop-color="#04ff2c"/><stop offset="0.4621" stop-color="#64ff13"/><stop offset="0.5517" stop-color="#b5ff00"/><stop offset="0.6230" stop-color="#fffe00"/><stop offset="0.6805" stop-color="#ffc800"/><stop offset="0.7563" stop-color="#ff9700"/><stop offset="0.8621" stop-color="#ff6a00"/><stop offset="1.0000" stop-color="#ff4500"/></linearGradient><linearGradient id="fm25" gradientUnits="userSpaceOnUse" x1="1550" y1="0" x2="2420" y2="0"><stop offset="0.0000" stop-color="#00ff61"/><stop offset="0.3172" stop-color="#00ff34"/><stop offset="0.3310" stop-color="#03ff32"/><stop offset="0.4552" stop-color="#62ff19"/><stop offset="0.5609" stop-color="#c6ff00"/><stop offset="0.6138" stop-color="#fffe00"/><stop offset="0.6690" stop-color="#ffc900"/><stop offset="0.7425" stop-color="#ff9800"/><stop offset="0.8437" stop-color="#ff6c00"/><stop offset="0.9885" stop-color="#ff4400"/><stop offset="1.0000" stop-color="#ff4100"/></linearGradient><linearGradient id="fm26" gradientUnits="userSpaceOnUse" x1="1550" y1="0" x2="2420" y2="0"><stop offset="0.0000" stop-color="#00ff66"/><stop offset="0.3149" stop-color="#00ff3a"/><stop offset="0.3287" stop-color="#03ff37"/><stop offset="0.4483" stop-color="#61ff20"/><stop offset="0.5517" stop-color="#c5ff06"/><stop offset="0.5885" stop-color="#edff00"/><stop offset="0.6046" stop-color="#fffe00"/><stop offset="0.6598" stop-color="#ffc800"/><stop offset="0.7333" stop-color="#ff9700"/><stop offset="0.8345" stop-color="#ff6a00"/><stop offset="0.9793" stop-color="#ff4200"/><stop offset="1.0000" stop-color="#ff3e00"/></linearGradient><linearGradient id="fm27" gradientUnits="userSpaceOnUse" x1="1550" y1="0" x2="2420" y2="0"><stop offset="0.0000" stop-color="#00ff6b"/><stop offset="0.3126" stop-color="#00ff40"/><stop offset="0.3264" stop-color="#04ff3d"/><stop offset="0.4437" stop-color="#62ff26"/><stop offset="0.5448" stop-color="#c6ff0d"/><stop offset="0.5954" stop-color="#fffe00"/><stop offset="0.6483" stop-color="#ffc900"/><stop offset="0.7195" stop-color="#ff9700"/><stop offset="0.8184" stop-color="#ff6a00"/><stop offset="0.9586" stop-color="#ff4200"/><stop offset="1.0000" stop-color="#ff3a00"/></linearGradient><linearGradient id="fm28" gradientUnits="userSpaceOnUse" x1="1550" y1="0" x2="2420" y2="0"><stop offset="0.0000" stop-color="#00ff70"/><stop offset="0.3103" stop-color="#00ff46"/><stop offset="0.3241" stop-color="#04ff43"/><stop offset="0.4391" stop-color="#63ff2c"/><stop offset="0.5379" stop-color="#c7ff15"/><stop offset="0.5862" stop-color="#fffe07"/><stop offset="0.6207" stop-color="#ffd900"/><stop offset="0.6851" stop-color="#ffa500"/><stop offset="0.7724" stop-color="#ff7700"/><stop offset="0.8943" stop-color="#ff4e00"/><stop offset="1.0000" stop-color="#ff3600"/></linearGradient><linearGradient id="fm29" gradientUnits="userSpaceOnUse" x1="1550" y1="0" x2="2420" y2="0"><stop offset="0.0000" stop-color="#00ff76"/><stop offset="0.3080" stop-color="#00ff4c"/><stop offset="0.3218" stop-color="#05ff4a"/><stop offset="0.4345" stop-color="#64ff33"/><stop offset="0.5310" stop-color="#c8ff1c"/><stop offset="0.5770" stop-color="#fffe0f"/><stop offset="0.6276" stop-color="#ffc900"/><stop offset="0.6966" stop-color="#ff9700"/><stop offset="0.7908" stop-color="#ff6a00"/><stop offset="0.9241" stop-color="#ff4200"/><stop offset="1.0000" stop-color="#ff3300"/></linearGradient><linearGradient id="fm30" gradientUnits="userSpaceOnUse" x1="1550" y1="0" x2="2420" y2="0"><stop offset="0.0000" stop-color="#00ff7c"/><stop offset="0.3057" stop-color="#00ff53"/><stop offset="0.3172" stop-color="#03ff51"/><stop offset="0.4276" stop-color="#63ff3b"/><stop offset="0.5218" stop-color="#c7ff25"/><stop offset="0.5678" stop-color="#fffe18"/><stop offset="0.6184" stop-color="#ffc807"/><stop offset="0.6575" stop-color="#ffa800"/><stop offset="0.7379" stop-color="#ff7a00"/><stop offset="0.8506" stop-color="#ff5100"/><stop offset="1.0000" stop-color="#ff2f00"/></linearGradient><linearGradient id="fm31" gradientUnits="userSpaceOnUse" x1="1550" y1="0" x2="2420" y2="0"><stop offset="0.0000" stop-color="#00ff82"/><stop offset="0.3034" stop-color="#00ff5a"/><stop offset="0.3149" stop-color="#04ff58"/><stop offset="0.4207" stop-color="#62ff43"/><stop offset="0.5126" stop-color="#c6ff2e"/><stop offset="0.5586" stop-color="#fffe21"/><stop offset="0.6069" stop-color="#ffc90f"/><stop offset="0.6690" stop-color="#ff9900"/><stop offset="0.7563" stop-color="#ff6c00"/><stop offset="0.8805" stop-color="#ff4400"/><stop offset="1.0000" stop-color="#ff2b00"/></linearGradient><linearGradient id="fm32" gradientUnits="userSpaceOnUse" x1="1550" y1="0" x2="2420" y2="0"><stop offset="0.0000" stop-color="#00ff88"/><stop offset="0.3034" stop-color="#00ff61"/><stop offset="0.3218" stop-color="#0cff5d"/><stop offset="0.4230" stop-color="#6aff4a"/><stop offset="0.5103" stop-color="#cdff35"/><stop offset="0.5494" stop-color="#fffe2b"/><stop offset="0.5977" stop-color="#ffc716"/><stop offset="0.6621" stop-color="#ff9603"/><stop offset="0.7218" stop-color="#ff7500"/><stop offset="0.8345" stop-color="#ff4c00"/><stop offset="1.0000" stop-color="#ff2800"/></linearGradient><linearGradient id="fm33" gradientUnits="userSpaceOnUse" x1="1550" y1="0" x2="2420" y2="0"><stop offset="0.0000" stop-color="#00ff8f"/><stop offset="0.3034" stop-color="#00ff68"/><stop offset="0.3954" stop-color="#53ff57"/><stop offset="0.4851" stop-color="#b7ff43"/><stop offset="0.5402" stop-color="#fffe35"/><stop offset="0.5862" stop-color="#ffc91f"/><stop offset="0.6483" stop-color="#ff970b"/><stop offset="0.7080" stop-color="#ff7500"/><stop offset="0.8184" stop-color="#ff4c00"/><stop offset="0.9793" stop-color="#ff2800"/><stop offset="1.0000" stop-color="#ff2400"/></linearGradient><linearGradient id="fm34" gradientUnits="userSpaceOnUse" x1="1550" y1="0" x2="2420" y2="0"><stop offset="0.0000" stop-color="#00ff96"/><stop offset="0.3011" stop-color="#00ff70"/><stop offset="0.3931" stop-color="#56ff60"/><stop offset="0.4782" stop-color="#b8ff4d"/><stop offset="0.5310" stop-color="#fffe40"/><stop offset="0.5747" stop-color="#ffca28"/><stop offset="0.6345" stop-color="#ff9813"/><stop offset="0.7149" stop-color="#ff6c00"/><stop offset="0.8299" stop-color="#ff4400"/><stop offset="1.0000" stop-color="#ff2100"/></linearGradient><linearGradient id="fm35" gradientUnits="userSpaceOnUse" x1="1550" y1="0" x2="2420" y2="0"><stop offset="0.0000" stop-color="#00ff9d"/><stop offset="0.3011" stop-color="#02ff79"/><stop offset="0.3977" stop-color="#61ff67"/><stop offset="0.4805" stop-color="#c5ff56"/><stop offset="0.5218" stop-color="#fffe4b"/><stop offset="0.5655" stop-color="#ffc831"/><stop offset="0.6230" stop-color="#ff971a"/><stop offset="0.7034" stop-color="#ff6a05"/><stop offset="0.7540" stop-color="#ff5600"/><stop offset="0.8920" stop-color="#ff3100"/><stop offset="1.0000" stop-color="#ff1e00"/></linearGradient><linearGradient id="fm36" gradientUnits="userSpaceOnUse" x1="1550" y1="0" x2="2420" y2="0"><stop offset="0.0000" stop-color="#00ffa5"/><stop offset="0.2989" stop-color="#02ff82"/><stop offset="0.3908" stop-color="#60ff72"/><stop offset="0.4713" stop-color="#c4ff61"/><stop offset="0.5126" stop-color="#fffe57"/><stop offset="0.5540" stop-color="#ffca3c"/><stop offset="0.6092" stop-color="#ff9923"/><stop offset="0.6851" stop-color="#ff6c0c"/><stop offset="0.7586" stop-color="#ff4f00"/><stop offset="0.9011" stop-color="#ff2b00"/><stop offset="1.0000" stop-color="#ff1a00"/></linearGradient><linearGradient id="fm37" gradientUnits="userSpaceOnUse" x1="1550" y1="0" x2="2420" y2="0"><stop offset="0.0000" stop-color="#00ffad"/><stop offset="0.2943" stop-color="#01ff8c"/><stop offset="0.3839" stop-color="#5eff7d"/><stop offset="0.4621" stop-color="#c2ff6e"/><stop offset="0.5034" stop-color="#ffff64"/><stop offset="0.5448" stop-color="#ffc846"/><stop offset="0.6000" stop-color="#ff972b"/><stop offset="0.6759" stop-color="#ff6a12"/><stop offset="0.7747" stop-color="#ff4500"/><stop offset="0.9310" stop-color="#ff2100"/><stop offset="1.0000" stop-color="#ff1700"/></linearGradient><linearGradient id="fm38" gradientUnits="userSpaceOnUse" x1="1550" y1="0" x2="2420" y2="0"><stop offset="0.0000" stop-color="#00ffb5"/><stop offset="0.2920" stop-color="#01ff96"/><stop offset="0.3793" stop-color="#5fff89"/><stop offset="0.4552" stop-color="#c3ff7a"/><stop offset="0.4943" stop-color="#ffff71"/><stop offset="0.5333" stop-color="#ffc952"/><stop offset="0.5862" stop-color="#ff9835"/><stop offset="0.6575" stop-color="#ff6c1b"/><stop offset="0.7609" stop-color="#ff4403"/><stop offset="0.8575" stop-color="#ff2b00"/><stop offset="1.0000" stop-color="#ff1300"/></linearGradient><linearGradient id="fm39" gradientUnits="userSpaceOnUse" x1="1550" y1="0" x2="2420" y2="0"><stop offset="0.0000" stop-color="#00ffbe"/><stop offset="0.2897" stop-color="#02ffa1"/><stop offset="0.3747" stop-color="#60ff95"/><stop offset="0.4483" stop-color="#c5ff88"/><stop offset="0.4851" stop-color="#ffff80"/><stop offset="0.5241" stop-color="#ffc85d"/><stop offset="0.5747" stop-color="#ff983f"/><stop offset="0.6437" stop-color="#ff6c23"/><stop offset="0.7425" stop-color="#ff440a"/><stop offset="0.8138" stop-color="#ff3000"/><stop offset="1.0000" stop-color="#ff1000"/></linearGradient><linearGradient id="fm40" gradientUnits="userSpaceOnUse" x1="1550" y1="0" x2="2420" y2="0"><stop offset="0.0000" stop-color="#00ffc7"/><stop offset="0.2874" stop-color="#02ffad"/><stop offset="0.3701" stop-color="#62ffa2"/><stop offset="0.4391" stop-color="#c3ff97"/><stop offset="0.4759" stop-color="#ffff8f"/><stop offset="0.5126" stop-color="#ffc96b"/><stop offset="0.5609" stop-color="#ff994a"/><stop offset="0.6276" stop-color="#ff6d2c"/><stop offset="0.7218" stop-color="#ff4511"/><stop offset="0.8276" stop-color="#ff2900"/><stop offset="1.0000" stop-color="#ff0d00"/></linearGradient><linearGradient id="fm41" gradientUnits="userSpaceOnUse" x1="1550" y1="0" x2="2420" y2="0"><stop offset="0.0000" stop-color="#00ffd1"/><stop offset="0.2828" stop-color="#00ffba"/><stop offset="0.3609" stop-color="#5dffb1"/><stop offset="0.4299" stop-color="#c1ffa6"/><stop offset="0.4667" stop-color="#ffffa0"/><stop offset="0.5034" stop-color="#ffc878"/><stop offset="0.5517" stop-color="#ff9754"/><stop offset="0.6184" stop-color="#ff6a33"/><stop offset="0.7126" stop-color="#ff4216"/><stop offset="0.8414" stop-color="#ff2200"/><stop offset="1.0000" stop-color="#ff0a00"/></linearGradient><linearGradient id="fm42" gradientUnits="userSpaceOnUse" x1="1550" y1="0" x2="2420" y2="0"><stop offset="0.0000" stop-color="#00ffdc"/><stop offset="0.2805" stop-color="#01ffc8"/><stop offset="0.3563" stop-color="#5effc0"/><stop offset="0.4230" stop-color="#c2ffb7"/><stop offset="0.4575" stop-color="#ffffb2"/><stop offset="0.4920" stop-color="#ffc988"/><stop offset="0.5379" stop-color="#ff9861"/><stop offset="0.6000" stop-color="#ff6c3e"/><stop offset="0.6897" stop-color="#ff441f"/><stop offset="0.8230" stop-color="#ff2104"/><stop offset="0.9080" stop-color="#ff1200"/><stop offset="1.0000" stop-color="#ff0600"/></linearGradient><linearGradient id="fm43" gradientUnits="userSpaceOnUse" x1="1550" y1="0" x2="2420" y2="0"><stop offset="0.0000" stop-color="#00ffe7"/><stop offset="0.2782" stop-color="#01ffd7"/><stop offset="0.3517" stop-color="#5fffd0"/><stop offset="0.4138" stop-color="#c0ffc9"/><stop offset="0.4483" stop-color="#ffffc5"/><stop offset="0.4805" stop-color="#ffcb99"/><stop offset="0.5241" stop-color="#ff9a6f"/><stop offset="0.5839" stop-color="#ff6d4a"/><stop offset="0.6690" stop-color="#ff4528"/><stop offset="0.7954" stop-color="#ff220b"/><stop offset="0.8828" stop-color="#ff1200"/><stop offset="1.0000" stop-color="#ff0300"/></linearGradient><linearGradient id="fm44" gradientUnits="userSpaceOnUse" x1="1550" y1="0" x2="2420" y2="0"><stop offset="0.0000" stop-color="#00fff3"/><stop offset="0.2759" stop-color="#02ffe6"/><stop offset="0.3471" stop-color="#61ffe1"/><stop offset="0.4069" stop-color="#c2ffdc"/><stop offset="0.4391" stop-color="#ffffd9"/><stop offset="0.4713" stop-color="#ffc9a9"/><stop offset="0.5126" stop-color="#ff997d"/><stop offset="0.5701" stop-color="#ff6d55"/><stop offset="0.6529" stop-color="#ff4531"/><stop offset="0.7747" stop-color="#ff2211"/><stop offset="0.8966" stop-color="#ff0c00"/><stop offset="1.0000" stop-color="#ff0000"/></linearGradient><linearGradient id="fm45" gradientUnits="userSpaceOnUse" x1="1550" y1="0" x2="2420" y2="0"><stop offset="0.0000" stop-color="#00ffff"/><stop offset="0.2713" stop-color="#00fff8"/><stop offset="0.3379" stop-color="#5bfff5"/><stop offset="0.3977" stop-color="#c0fff1"/><stop offset="0.4299" stop-color="#ffffef"/><stop offset="0.4621" stop-color="#ffc7b9"/><stop offset="0.5034" stop-color="#ff968a"/><stop offset="0.5609" stop-color="#ff6a5e"/><stop offset="0.6414" stop-color="#ff4238"/><stop offset="0.7632" stop-color="#ff1f16"/><stop offset="0.9103" stop-color="#ff0700"/><stop offset="1.0000" stop-color="#ff0000"/></linearGradient><linearGradient id="fm46" gradientUnits="userSpaceOnUse" x1="1550" y1="0" x2="2420" y2="0"><stop offset="0.0000" stop-color="#00f2ff"/><stop offset="0.2690" stop-color="#00f4ff"/><stop offset="0.3333" stop-color="#59f5ff"/><stop offset="0.3885" stop-color="#b7f6ff"/><stop offset="0.4253" stop-color="#fff6fd"/><stop offset="0.4552" stop-color="#ffc2c8"/><stop offset="0.4943" stop-color="#ff9397"/><stop offset="0.5494" stop-color="#ff6869"/><stop offset="0.6276" stop-color="#ff4141"/><stop offset="0.7425" stop-color="#ff1f1d"/><stop offset="0.9172" stop-color="#ff0200"/><stop offset="1.0000" stop-color="#ff0000"/></linearGradient><linearGradient id="fm47" gradientUnits="userSpaceOnUse" x1="1550" y1="0" x2="2420" y2="0"><stop offset="0.0000" stop-color="#00e6ff"/><stop offset="0.2667" stop-color="#01e3ff"/><stop offset="0.3333" stop-color="#5ae2ff"/><stop offset="0.3908" stop-color="#b9e1ff"/><stop offset="0.4276" stop-color="#ffdefd"/><stop offset="0.4575" stop-color="#ffb0c9"/><stop offset="0.4989" stop-color="#ff8397"/><stop offset="0.5540" stop-color="#ff5c6a"/><stop offset="0.6322" stop-color="#ff3842"/><stop offset="0.7494" stop-color="#ff181f"/><stop offset="0.9149" stop-color="#ff0002"/><stop offset="1.0000" stop-color="#ff0000"/></linearGradient><linearGradient id="fm48" gradientUnits="userSpaceOnUse" x1="1550" y1="0" x2="2420" y2="0"><stop offset="0.0000" stop-color="#00daff"/><stop offset="0.2644" stop-color="#01d3ff"/><stop offset="0.3333" stop-color="#5bd0ff"/><stop offset="0.3931" stop-color="#bbcdff"/><stop offset="0.4299" stop-color="#ffc9fc"/><stop offset="0.4621" stop-color="#ff9cc6"/><stop offset="0.5057" stop-color="#ff7294"/><stop offset="0.5655" stop-color="#ff4d67"/><stop offset="0.6506" stop-color="#ff2c3e"/><stop offset="0.7770" stop-color="#ff0e1b"/><stop offset="0.8943" stop-color="#ff0007"/><stop offset="0.9793" stop-color="#ff0000"/><stop offset="1.0000" stop-color="#ff0000"/></linearGradient><linearGradient id="fm49" gradientUnits="userSpaceOnUse" x1="1550" y1="0" x2="2420" y2="0"><stop offset="0.0000" stop-color="#00cfff"/><stop offset="0.2621" stop-color="#02c4ff"/><stop offset="0.3333" stop-color="#5cbfff"/><stop offset="0.3931" stop-color="#babaff"/><stop offset="0.4299" stop-color="#feb7ff"/><stop offset="0.4667" stop-color="#ff8ac4"/><stop offset="0.5103" stop-color="#ff6494"/><stop offset="0.5701" stop-color="#ff4368"/><stop offset="0.6552" stop-color="#ff2440"/><stop offset="0.7816" stop-color="#ff091d"/><stop offset="0.8667" stop-color="#ff000d"/><stop offset="0.9885" stop-color="#ff0000"/><stop offset="1.0000" stop-color="#ff0000"/></linearGradient><linearGradient id="fm50" gradientUnits="userSpaceOnUse" x1="1550" y1="0" x2="2420" y2="0"><stop offset="0.0000" stop-color="#00c4ff"/><stop offset="0.2598" stop-color="#02b5ff"/><stop offset="0.3333" stop-color="#5dafff"/><stop offset="0.3954" stop-color="#bca8ff"/><stop offset="0.4322" stop-color="#fea4ff"/><stop offset="0.4690" stop-color="#ff7bc5"/><stop offset="0.5149" stop-color="#ff5793"/><stop offset="0.5770" stop-color="#ff3867"/><stop offset="0.6667" stop-color="#ff1b3f"/><stop offset="0.8000" stop-color="#ff021b"/><stop offset="0.9885" stop-color="#ff0000"/><stop offset="1.0000" stop-color="#ff0000"/></linearGradient><linearGradient id="fm51" gradientUnits="userSpaceOnUse" x1="1550" y1="0" x2="2420" y2="0"><stop offset="0.0000" stop-color="#00b9ff"/><stop offset="0.2552" stop-color="#00a7ff"/><stop offset="0.3310" stop-color="#5ba0ff"/><stop offset="0.3954" stop-color="#ba98ff"/><stop offset="0.4345" stop-color="#ff92ff"/><stop offset="0.4690" stop-color="#ff6ec9"/><stop offset="0.5149" stop-color="#ff4d97"/><stop offset="0.5770" stop-color="#ff306a"/><stop offset="0.6644" stop-color="#ff1642"/><stop offset="0.7931" stop-color="#ff001f"/><stop offset="0.9977" stop-color="#ff0000"/><stop offset="1.0000" stop-color="#ff0000"/></linearGradient><linearGradient id="fm52" gradientUnits="userSpaceOnUse" x1="1550" y1="0" x2="2420" y2="0"><stop offset="0.0000" stop-color="#00afff"/><stop offset="0.2529" stop-color="#019aff"/><stop offset="0.3310" stop-color="#5c91ff"/><stop offset="0.3977" stop-color="#bd87ff"/><stop offset="0.4368" stop-color="#ff80ff"/><stop offset="0.4713" stop-color="#ff60ca"/><stop offset="0.5172" stop-color="#ff4399"/><stop offset="0.5816" stop-color="#ff276b"/><stop offset="0.6713" stop-color="#ff0e43"/><stop offset="0.7678" stop-color="#ff0027"/><stop offset="0.9540" stop-color="#ff0007"/><stop offset="1.0000" stop-color="#ff0002"/></linearGradient><linearGradient id="fm53" gradientUnits="userSpaceOnUse" x1="1550" y1="0" x2="2420" y2="0"><stop offset="0.0000" stop-color="#00a5ff"/><stop offset="0.2506" stop-color="#018eff"/><stop offset="0.3310" stop-color="#5d83ff"/><stop offset="0.3977" stop-color="#bb78ff"/><stop offset="0.4391" stop-color="#ff70fe"/><stop offset="0.4759" stop-color="#ff51c8"/><stop offset="0.5241" stop-color="#ff3696"/><stop offset="0.5908" stop-color="#ff1d69"/><stop offset="0.6851" stop-color="#ff0641"/><stop offset="0.7448" stop-color="#ff002f"/><stop offset="0.9172" stop-color="#ff000e"/><stop offset="1.0000" stop-color="#ff0004"/></linearGradient><linearGradient id="fm54" gradientUnits="userSpaceOnUse" x1="1550" y1="0" x2="2420" y2="0"><stop offset="0.0000" stop-color="#009bff"/><stop offset="0.2483" stop-color="#0282ff"/><stop offset="0.3287" stop-color="#5b76ff"/><stop offset="0.3977" stop-color="#ba6aff"/><stop offset="0.4414" stop-color="#ff60fe"/><stop offset="0.4782" stop-color="#ff45c8"/><stop offset="0.5287" stop-color="#ff2b96"/><stop offset="0.5977" stop-color="#ff1469"/><stop offset="0.6943" stop-color="#ff0041"/><stop offset="0.8391" stop-color="#ff001d"/><stop offset="1.0000" stop-color="#ff0005"/></linearGradient><linearGradient id="fm55" gradientUnits="userSpaceOnUse" x1="1550" y1="0" x2="2420" y2="0"><stop offset="0.0000" stop-color="#0092ff"/><stop offset="0.2460" stop-color="#0277ff"/><stop offset="0.3287" stop-color="#5c6aff"/><stop offset="0.4000" stop-color="#bc5cff"/><stop offset="0.4437" stop-color="#ff51fd"/><stop offset="0.4828" stop-color="#ff38c6"/><stop offset="0.5333" stop-color="#ff2196"/><stop offset="0.6023" stop-color="#ff0c69"/><stop offset="0.6736" stop-color="#ff004a"/><stop offset="0.8069" stop-color="#ff0025"/><stop offset="1.0000" stop-color="#ff0007"/></linearGradient><linearGradient id="fm56" gradientUnits="userSpaceOnUse" x1="1550" y1="0" x2="2420" y2="0"><stop offset="0.0000" stop-color="#0089ff"/><stop offset="0.2437" stop-color="#026cff"/><stop offset="0.3287" stop-color="#5d5eff"/><stop offset="0.4023" stop-color="#bd4eff"/><stop offset="0.4460" stop-color="#ff43fd"/><stop offset="0.4851" stop-color="#ff2cc7"/><stop offset="0.5379" stop-color="#ff1795"/><stop offset="0.6092" stop-color="#ff0469"/><stop offset="0.6644" stop-color="#ff0050"/><stop offset="0.7931" stop-color="#ff002b"/><stop offset="0.9908" stop-color="#ff000a"/><stop offset="1.0000" stop-color="#ff0009"/></linearGradient><linearGradient id="fm57" gradientUnits="userSpaceOnUse" x1="1550" y1="0" x2="2420" y2="0"><stop offset="0.0000" stop-color="#0080ff"/><stop offset="0.2391" stop-color="#0162ff"/><stop offset="0.3264" stop-color="#5b53ff"/><stop offset="0.4023" stop-color="#bc42ff"/><stop offset="0.4460" stop-color="#fe37ff"/><stop offset="0.4897" stop-color="#ff20c5"/><stop offset="0.5448" stop-color="#ff0d93"/><stop offset="0.6092" stop-color="#ff006c"/><stop offset="0.7103" stop-color="#ff0043"/><stop offset="0.8598" stop-color="#ff0020"/><stop offset="1.0000" stop-color="#ff000b"/></linearGradient><linearGradient id="fm58" gradientUnits="userSpaceOnUse" x1="1550" y1="0" x2="2420" y2="0"><stop offset="0.0000" stop-color="#0078ff"/><stop offset="0.2368" stop-color="#0159ff"/><stop offset="0.3264" stop-color="#5c48ff"/><stop offset="0.4023" stop-color="#bb36ff"/><stop offset="0.4483" stop-color="#ff2aff"/><stop offset="0.4920" stop-color="#ff16c6"/><stop offset="0.5471" stop-color="#ff0595"/><stop offset="0.5885" stop-color="#ff007a"/><stop offset="0.6805" stop-color="#ff0050"/><stop offset="0.8161" stop-color="#ff002a"/><stop offset="1.0000" stop-color="#ff000d"/></linearGradient><linearGradient id="fm59" gradientUnits="userSpaceOnUse" x1="1550" y1="0" x2="2420" y2="0"><stop offset="0.0000" stop-color="#0070ff"/><stop offset="0.2345" stop-color="#014fff"/><stop offset="0.3264" stop-color="#5d3dff"/><stop offset="0.4046" stop-color="#bc2bff"/><stop offset="0.4506" stop-color="#ff1eff"/><stop offset="0.4920" stop-color="#ff0dc9"/><stop offset="0.5448" stop-color="#ff0099"/><stop offset="0.6207" stop-color="#ff006c"/><stop offset="0.7264" stop-color="#ff0043"/><stop offset="0.8828" stop-color="#ff001f"/><stop offset="1.0000" stop-color="#ff000e"/></linearGradient><linearGradient id="fm60" gradientUnits="userSpaceOnUse" x1="1550" y1="0" x2="2420" y2="0"><stop offset="0.0000" stop-color="#0068ff"/><stop offset="0.2322" stop-color="#0246ff"/><stop offset="0.3264" stop-color="#5e33ff"/><stop offset="0.4069" stop-color="#be1fff"/><stop offset="0.4529" stop-color="#ff12ff"/><stop offset="0.4966" stop-color="#ff02c8"/><stop offset="0.5540" stop-color="#ff0096"/><stop offset="0.6322" stop-color="#ff0069"/><stop offset="0.7425" stop-color="#ff0041"/><stop offset="0.9080" stop-color="#ff001d"/><stop offset="1.0000" stop-color="#ff0010"/></linearGradient><linearGradient id="fm61" gradientUnits="userSpaceOnUse" x1="1550" y1="0" x2="2420" y2="0"><stop offset="0.0000" stop-color="#0060ff"/><stop offset="0.2299" stop-color="#023eff"/><stop offset="0.3264" stop-color="#5e2aff"/><stop offset="0.4069" stop-color="#bd15ff"/><stop offset="0.4552" stop-color="#ff06fe"/><stop offset="0.4874" stop-color="#ff00d5"/><stop offset="0.5425" stop-color="#ff00a1"/><stop offset="0.6161" stop-color="#ff0073"/><stop offset="0.7195" stop-color="#ff004a"/><stop offset="0.8713" stop-color="#ff0025"/><stop offset="1.0000" stop-color="#ff0012"/></linearGradient><linearGradient id="fm62" gradientUnits="userSpaceOnUse" x1="1550" y1="0" x2="2420" y2="0"><stop offset="0.0000" stop-color="#0058ff"/><stop offset="0.2276" stop-color="#0335ff"/><stop offset="0.3241" stop-color="#5d21ff"/><stop offset="0.4069" stop-color="#bc0bff"/><stop offset="0.4529" stop-color="#fa00ff"/><stop offset="0.4598" stop-color="#ff00fa"/><stop offset="0.5057" stop-color="#ff00c4"/><stop offset="0.5678" stop-color="#ff0092"/><stop offset="0.6529" stop-color="#ff0065"/><stop offset="0.7724" stop-color="#ff003d"/><stop offset="0.9517" stop-color="#ff001a"/><stop offset="1.0000" stop-color="#ff0013"/></linearGradient><linearGradient id="fm63" gradientUnits="userSpaceOnUse" x1="1550" y1="0" x2="2420" y2="0"><stop offset="0.0000" stop-color="#0051ff"/><stop offset="0.2230" stop-color="#012eff"/><stop offset="0.3218" stop-color="#5b18ff"/><stop offset="0.4069" stop-color="#ba02ff"/><stop offset="0.4598" stop-color="#ff00fd"/><stop offset="0.5057" stop-color="#ff00c7"/><stop offset="0.5678" stop-color="#ff0095"/><stop offset="0.6529" stop-color="#ff0067"/><stop offset="0.7724" stop-color="#ff003f"/><stop offset="0.9517" stop-color="#ff001c"/><stop offset="1.0000" stop-color="#ff0015"/></linearGradient><linearGradient id="fm64" gradientUnits="userSpaceOnUse" x1="1550" y1="0" x2="2420" y2="0"><stop offset="0.0000" stop-color="#004aff"/><stop offset="0.2207" stop-color="#0126ff"/><stop offset="0.3218" stop-color="#5c10ff"/><stop offset="0.3931" stop-color="#a900ff"/><stop offset="0.4621" stop-color="#ff00fd"/><stop offset="0.5080" stop-color="#ff00c8"/><stop offset="0.5701" stop-color="#ff0096"/><stop offset="0.6552" stop-color="#ff0069"/><stop offset="0.7747" stop-color="#ff0041"/><stop offset="0.9540" stop-color="#ff001d"/><stop offset="1.0000" stop-color="#ff0017"/></linearGradient><linearGradient id="fm65" gradientUnits="userSpaceOnUse" x1="1550" y1="0" x2="2420" y2="0"><stop offset="0.0000" stop-color="#0043ff"/><stop offset="0.2184" stop-color="#021fff"/><stop offset="0.3218" stop-color="#5c08ff"/><stop offset="0.3655" stop-color="#8900ff"/><stop offset="0.4483" stop-color="#ec00ff"/><stop offset="0.4644" stop-color="#ff00fd"/><stop offset="0.5126" stop-color="#ff00c6"/><stop offset="0.5770" stop-color="#ff0094"/><stop offset="0.6644" stop-color="#ff0068"/><stop offset="0.7885" stop-color="#ff0040"/><stop offset="0.9747" stop-color="#ff001c"/><stop offset="1.0000" stop-color="#ff0019"/></linearGradient><linearGradient id="fm66" gradientUnits="userSpaceOnUse" x1="1550" y1="0" x2="2420" y2="0"><stop offset="0.0000" stop-color="#003cff"/><stop offset="0.2161" stop-color="#0218ff"/><stop offset="0.3218" stop-color="#5d00ff"/><stop offset="0.4115" stop-color="#bc00ff"/><stop offset="0.4644" stop-color="#ff00ff"/><stop offset="0.5149" stop-color="#ff00c7"/><stop offset="0.5793" stop-color="#ff0096"/><stop offset="0.6690" stop-color="#ff0068"/><stop offset="0.7954" stop-color="#ff0040"/><stop offset="0.9839" stop-color="#ff001c"/><stop offset="1.0000" stop-color="#ff001a"/></linearGradient><linearGradient id="fm67" gradientUnits="userSpaceOnUse" x1="1550" y1="0" x2="2420" y2="0"><stop offset="0.0000" stop-color="#0036ff"/><stop offset="0.2138" stop-color="#0211ff"/><stop offset="0.3011" stop-color="#4b00ff"/><stop offset="0.3954" stop-color="#a900ff"/><stop offset="0.4667" stop-color="#ff00ff"/><stop offset="0.5172" stop-color="#ff00c7"/><stop offset="0.5839" stop-color="#ff0095"/><stop offset="0.6736" stop-color="#ff0069"/><stop offset="0.8023" stop-color="#ff0040"/><stop offset="0.9931" stop-color="#ff001d"/><stop offset="1.0000" stop-color="#ff001c"/></linearGradient><linearGradient id="fm68" gradientUnits="userSpaceOnUse" x1="1550" y1="0" x2="2420" y2="0"><stop offset="0.0000" stop-color="#002fff"/><stop offset="0.2092" stop-color="#010bff"/><stop offset="0.2736" stop-color="#3400ff"/><stop offset="0.3747" stop-color="#9200ff"/><stop offset="0.4598" stop-color="#f400ff"/><stop offset="0.4713" stop-color="#ff00fc"/><stop offset="0.5218" stop-color="#ff00c6"/><stop offset="0.5908" stop-color="#ff0094"/><stop offset="0.6851" stop-color="#ff0066"/><stop offset="0.8184" stop-color="#ff003e"/><stop offset="1.0000" stop-color="#ff001d"/></linearGradient><linearGradient id="fm69" gradientUnits="userSpaceOnUse" x1="1550" y1="0" x2="2420" y2="0"><stop offset="0.0000" stop-color="#0029ff"/><stop offset="0.2069" stop-color="#0105ff"/><stop offset="0.2529" stop-color="#2400ff"/><stop offset="0.3586" stop-color="#8200ff"/><stop offset="0.4483" stop-color="#e400ff"/><stop offset="0.4713" stop-color="#ff00fe"/><stop offset="0.5218" stop-color="#ff00c9"/><stop offset="0.5908" stop-color="#ff0096"/><stop offset="0.6851" stop-color="#ff0069"/><stop offset="0.8184" stop-color="#ff0040"/><stop offset="1.0000" stop-color="#ff001f"/></linearGradient><linearGradient id="fm70" gradientUnits="userSpaceOnUse" x1="1550" y1="0" x2="2420" y2="0"><stop offset="0.0000" stop-color="#0023ff"/><stop offset="0.2046" stop-color="#0200ff"/><stop offset="0.3172" stop-color="#5c00ff"/><stop offset="0.4138" stop-color="#bb00ff"/><stop offset="0.4736" stop-color="#ff00fe"/><stop offset="0.5264" stop-color="#ff00c7"/><stop offset="0.5954" stop-color="#ff0096"/><stop offset="0.6897" stop-color="#ff0069"/><stop offset="0.8253" stop-color="#ff0041"/><stop offset="1.0000" stop-color="#ff0021"/></linearGradient><linearGradient id="fm71" gradientUnits="userSpaceOnUse" x1="1550" y1="0" x2="2420" y2="0"><stop offset="0.0000" stop-color="#001dff"/><stop offset="0.1816" stop-color="#0000ff"/><stop offset="0.2023" stop-color="#0200ff"/><stop offset="0.3172" stop-color="#5c00ff"/><stop offset="0.4161" stop-color="#bc00ff"/><stop offset="0.4759" stop-color="#ff00fd"/><stop offset="0.5287" stop-color="#ff00c8"/><stop offset="0.6000" stop-color="#ff0096"/><stop offset="0.6966" stop-color="#ff0069"/><stop offset="0.8345" stop-color="#ff0040"/><stop offset="1.0000" stop-color="#ff0022"/></linearGradient><linearGradient id="fm72" gradientUnits="userSpaceOnUse" x1="1550" y1="0" x2="2420" y2="0"><stop offset="0.0000" stop-color="#0018ff"/><stop offset="0.1494" stop-color="#0000ff"/><stop offset="0.2000" stop-color="#0200ff"/><stop offset="0.3172" stop-color="#5d00ff"/><stop offset="0.4184" stop-color="#bd00ff"/><stop offset="0.4782" stop-color="#ff00fd"/><stop offset="0.5333" stop-color="#ff00c6"/><stop offset="0.6069" stop-color="#ff0094"/><stop offset="0.7080" stop-color="#ff0067"/><stop offset="0.8506" stop-color="#ff003f"/><stop offset="1.0000" stop-color="#ff0024"/></linearGradient><linearGradient id="fm73" gradientUnits="userSpaceOnUse" x1="1550" y1="0" x2="2420" y2="0"><stop offset="0.0000" stop-color="#0012ff"/><stop offset="0.1195" stop-color="#0000ff"/><stop offset="0.1977" stop-color="#0200ff"/><stop offset="0.3172" stop-color="#5d00ff"/><stop offset="0.4184" stop-color="#bc00ff"/><stop offset="0.4805" stop-color="#ff00fd"/><stop offset="0.5356" stop-color="#ff00c7"/><stop offset="0.6092" stop-color="#ff0095"/><stop offset="0.7103" stop-color="#ff0068"/><stop offset="0.8529" stop-color="#ff0040"/><stop offset="1.0000" stop-color="#ff0025"/></linearGradient><linearGradient id="fm74" gradientUnits="userSpaceOnUse" x1="1550" y1="0" x2="2420" y2="0"><stop offset="0.0000" stop-color="#000dff"/><stop offset="0.0920" stop-color="#0000ff"/><stop offset="0.1931" stop-color="#0100ff"/><stop offset="0.3149" stop-color="#5c00ff"/><stop offset="0.4184" stop-color="#bb00ff"/><stop offset="0.4828" stop-color="#ff00fc"/><stop offset="0.5402" stop-color="#ff00c5"/><stop offset="0.6161" stop-color="#ff0094"/><stop offset="0.7195" stop-color="#ff0067"/><stop offset="0.8667" stop-color="#ff003f"/><stop offset="1.0000" stop-color="#ff0027"/></linearGradient><linearGradient id="fm75" gradientUnits="userSpaceOnUse" x1="1550" y1="0" x2="2420" y2="0"><stop offset="0.0000" stop-color="#0007ff"/><stop offset="0.0667" stop-color="#0000ff"/><stop offset="0.1908" stop-color="#0100ff"/><stop offset="0.3149" stop-color="#5d00ff"/><stop offset="0.4207" stop-color="#bd00ff"/><stop offset="0.4828" stop-color="#ff00ff"/><stop offset="0.5402" stop-color="#ff00c8"/><stop offset="0.6161" stop-color="#ff0096"/><stop offset="0.7195" stop-color="#ff0069"/><stop offset="0.8667" stop-color="#ff0041"/><stop offset="1.0000" stop-color="#ff0029"/></linearGradient>
<linearGradient id="fi0" gradientUnits="userSpaceOnUse" x1="2198" y1="0" x2="2532" y2="0"><stop offset="0.0000" stop-color="#c4ff00"/><stop offset="0.8263" stop-color="#fffd00"/><stop offset="1.0000" stop-color="#fff000"/></linearGradient><linearGradient id="fi1" gradientUnits="userSpaceOnUse" x1="2198" y1="0" x2="2532" y2="0"><stop offset="0.0000" stop-color="#c5ff00"/><stop offset="0.8084" stop-color="#fffd00"/><stop offset="1.0000" stop-color="#ffef00"/></linearGradient><linearGradient id="fi2" gradientUnits="userSpaceOnUse" x1="2198" y1="0" x2="2532" y2="0"><stop offset="0.0000" stop-color="#c6ff00"/><stop offset="0.7904" stop-color="#fffd00"/><stop offset="1.0000" stop-color="#ffed00"/></linearGradient><linearGradient id="fi3" gradientUnits="userSpaceOnUse" x1="2198" y1="0" x2="2532" y2="0"><stop offset="0.0000" stop-color="#c7ff01"/><stop offset="0.7725" stop-color="#fffd00"/><stop offset="1.0000" stop-color="#ffec00"/></linearGradient><linearGradient id="fi4" gradientUnits="userSpaceOnUse" x1="2198" y1="0" x2="2532" y2="0"><stop offset="0.0000" stop-color="#c8ff01"/><stop offset="0.7605" stop-color="#fffc00"/><stop offset="1.0000" stop-color="#ffeb00"/></linearGradient><linearGradient id="fi5" gradientUnits="userSpaceOnUse" x1="2198" y1="0" x2="2532" y2="0"><stop offset="0.0000" stop-color="#c9ff02"/><stop offset="0.7425" stop-color="#fffc00"/><stop offset="1.0000" stop-color="#ffe900"/></linearGradient><linearGradient id="fi6" gradientUnits="userSpaceOnUse" x1="2198" y1="0" x2="2532" y2="0"><stop offset="0.0000" stop-color="#caff02"/><stop offset="0.7246" stop-color="#fffc00"/><stop offset="1.0000" stop-color="#ffe800"/></linearGradient><linearGradient id="fi7" gradientUnits="userSpaceOnUse" x1="2198" y1="0" x2="2532" y2="0"><stop offset="0.0000" stop-color="#ccff03"/><stop offset="0.7066" stop-color="#fffd00"/><stop offset="1.0000" stop-color="#ffe700"/></linearGradient><linearGradient id="fi8" gradientUnits="userSpaceOnUse" x1="2198" y1="0" x2="2532" y2="0"><stop offset="0.0000" stop-color="#cdff04"/><stop offset="0.6228" stop-color="#fcff00"/><stop offset="0.9341" stop-color="#ffea00"/><stop offset="1.0000" stop-color="#ffe600"/></linearGradient><linearGradient id="fi9" gradientUnits="userSpaceOnUse" x1="2198" y1="0" x2="2532" y2="0"><stop offset="0.0000" stop-color="#ceff04"/><stop offset="0.5449" stop-color="#f7ff00"/><stop offset="0.6826" stop-color="#fffc00"/><stop offset="1.0000" stop-color="#ffe400"/></linearGradient><linearGradient id="fi10" gradientUnits="userSpaceOnUse" x1="2198" y1="0" x2="2532" y2="0"><stop offset="0.0000" stop-color="#cfff05"/><stop offset="0.5269" stop-color="#f7ff00"/><stop offset="0.6647" stop-color="#fffc00"/><stop offset="1.0000" stop-color="#ffe300"/></linearGradient><linearGradient id="fi11" gradientUnits="userSpaceOnUse" x1="2198" y1="0" x2="2532" y2="0"><stop offset="0.0000" stop-color="#d0ff06"/><stop offset="0.5329" stop-color="#f9ff00"/><stop offset="0.6587" stop-color="#fffb00"/><stop offset="1.0000" stop-color="#ffe200"/></linearGradient><linearGradient id="fi12" gradientUnits="userSpaceOnUse" x1="2198" y1="0" x2="2532" y2="0"><stop offset="0.0000" stop-color="#d1ff06"/><stop offset="0.5389" stop-color="#fbff00"/><stop offset="0.6766" stop-color="#fff800"/><stop offset="1.0000" stop-color="#ffe100"/></linearGradient><linearGradient id="fi13" gradientUnits="userSpaceOnUse" x1="2198" y1="0" x2="2532" y2="0"><stop offset="0.0000" stop-color="#d2ff07"/><stop offset="0.5569" stop-color="#feff00"/><stop offset="1.0000" stop-color="#ffe000"/></linearGradient><linearGradient id="fi14" gradientUnits="userSpaceOnUse" x1="2198" y1="0" x2="2532" y2="0"><stop offset="0.0000" stop-color="#d4ff07"/><stop offset="0.5808" stop-color="#fffd00"/><stop offset="1.0000" stop-color="#ffde00"/></linearGradient><linearGradient id="fi15" gradientUnits="userSpaceOnUse" x1="2198" y1="0" x2="2532" y2="0"><stop offset="0.0000" stop-color="#d5ff08"/><stop offset="0.5689" stop-color="#fffc00"/><stop offset="1.0000" stop-color="#ffdd00"/></linearGradient><linearGradient id="fi16" gradientUnits="userSpaceOnUse" x1="2198" y1="0" x2="2532" y2="0"><stop offset="0.0000" stop-color="#d6ff09"/><stop offset="0.5509" stop-color="#fffc00"/><stop offset="1.0000" stop-color="#ffdc00"/></linearGradient><linearGradient id="fi17" gradientUnits="userSpaceOnUse" x1="2198" y1="0" x2="2532" y2="0"><stop offset="0.0000" stop-color="#d7ff09"/><stop offset="0.5329" stop-color="#fffd00"/><stop offset="1.0000" stop-color="#ffdb00"/></linearGradient><linearGradient id="fi18" gradientUnits="userSpaceOnUse" x1="2198" y1="0" x2="2532" y2="0"><stop offset="0.0000" stop-color="#d8ff0a"/><stop offset="0.5150" stop-color="#fffd00"/><stop offset="1.0000" stop-color="#ffd900"/></linearGradient><linearGradient id="fi19" gradientUnits="userSpaceOnUse" x1="2198" y1="0" x2="2532" y2="0"><stop offset="0.0000" stop-color="#daff0b"/><stop offset="0.4970" stop-color="#fffd01"/><stop offset="1.0000" stop-color="#ffd800"/></linearGradient><linearGradient id="fi20" gradientUnits="userSpaceOnUse" x1="2198" y1="0" x2="2532" y2="0"><stop offset="0.0000" stop-color="#dbff0b"/><stop offset="0.4790" stop-color="#fffd02"/><stop offset="1.0000" stop-color="#ffd700"/></linearGradient><linearGradient id="fi21" gradientUnits="userSpaceOnUse" x1="2198" y1="0" x2="2532" y2="0"><stop offset="0.0000" stop-color="#dcff0c"/><stop offset="0.4611" stop-color="#fffd03"/><stop offset="1.0000" stop-color="#ffd600"/></linearGradient><linearGradient id="fi22" gradientUnits="userSpaceOnUse" x1="2198" y1="0" x2="2532" y2="0"><stop offset="0.0000" stop-color="#ddff0d"/><stop offset="0.4431" stop-color="#fffd04"/><stop offset="0.9701" stop-color="#ffd600"/><stop offset="1.0000" stop-color="#ffd500"/></linearGradient><linearGradient id="fi23" gradientUnits="userSpaceOnUse" x1="2198" y1="0" x2="2532" y2="0"><stop offset="0.0000" stop-color="#dfff0d"/><stop offset="0.4311" stop-color="#fffc05"/><stop offset="0.9222" stop-color="#ffd800"/><stop offset="1.0000" stop-color="#ffd300"/></linearGradient><linearGradient id="fi24" gradientUnits="userSpaceOnUse" x1="2198" y1="0" x2="2532" y2="0"><stop offset="0.0000" stop-color="#e0ff0e"/><stop offset="0.4132" stop-color="#fffc06"/><stop offset="0.9162" stop-color="#ffd800"/><stop offset="1.0000" stop-color="#ffd200"/></linearGradient><linearGradient id="fi25" gradientUnits="userSpaceOnUse" x1="2198" y1="0" x2="2532" y2="0"><stop offset="0.0000" stop-color="#e1ff0f"/><stop offset="0.3952" stop-color="#fffc07"/><stop offset="0.9281" stop-color="#ffd600"/><stop offset="1.0000" stop-color="#ffd100"/></linearGradient><linearGradient id="fi26" gradientUnits="userSpaceOnUse" x1="2198" y1="0" x2="2532" y2="0"><stop offset="0.0000" stop-color="#e2ff10"/><stop offset="0.3772" stop-color="#fffc08"/><stop offset="0.9461" stop-color="#ffd300"/><stop offset="1.0000" stop-color="#ffd000"/></linearGradient><linearGradient id="fi27" gradientUnits="userSpaceOnUse" x1="2198" y1="0" x2="2532" y2="0"><stop offset="0.0000" stop-color="#e4ff10"/><stop offset="0.3593" stop-color="#fffd09"/><stop offset="0.9641" stop-color="#ffd100"/><stop offset="1.0000" stop-color="#ffcf00"/></linearGradient><linearGradient id="fi28" gradientUnits="userSpaceOnUse" x1="2198" y1="0" x2="2532" y2="0"><stop offset="0.0000" stop-color="#e5ff11"/><stop offset="0.3413" stop-color="#fffd0a"/><stop offset="0.9940" stop-color="#ffce00"/><stop offset="1.0000" stop-color="#ffcd00"/></linearGradient><linearGradient id="fi29" gradientUnits="userSpaceOnUse" x1="2198" y1="0" x2="2532" y2="0"><stop offset="0.0000" stop-color="#e6ff12"/><stop offset="0.3234" stop-color="#fffd0b"/><stop offset="1.0000" stop-color="#ffcc00"/></linearGradient><linearGradient id="fi30" gradientUnits="userSpaceOnUse" x1="2198" y1="0" x2="2532" y2="0"><stop offset="0.0000" stop-color="#e8ff12"/><stop offset="0.3114" stop-color="#fffc0c"/><stop offset="1.0000" stop-color="#ffcb00"/></linearGradient><linearGradient id="fi31" gradientUnits="userSpaceOnUse" x1="2198" y1="0" x2="2532" y2="0"><stop offset="0.0000" stop-color="#e9ff13"/><stop offset="0.2934" stop-color="#fffc0d"/><stop offset="1.0000" stop-color="#ffca00"/></linearGradient><linearGradient id="fi32" gradientUnits="userSpaceOnUse" x1="2198" y1="0" x2="2532" y2="0"><stop offset="0.0000" stop-color="#eaff14"/><stop offset="0.2754" stop-color="#fffc0e"/><stop offset="1.0000" stop-color="#ffc900"/></linearGradient><linearGradient id="fi33" gradientUnits="userSpaceOnUse" x1="2198" y1="0" x2="2532" y2="0"><stop offset="0.0000" stop-color="#ecff15"/><stop offset="0.2575" stop-color="#fffc10"/><stop offset="1.0000" stop-color="#ffc700"/></linearGradient><linearGradient id="fi34" gradientUnits="userSpaceOnUse" x1="2198" y1="0" x2="2532" y2="0"><stop offset="0.0000" stop-color="#edff16"/><stop offset="0.2395" stop-color="#fffc11"/><stop offset="1.0000" stop-color="#ffc600"/></linearGradient><linearGradient id="fi35" gradientUnits="userSpaceOnUse" x1="2198" y1="0" x2="2532" y2="0"><stop offset="0.0000" stop-color="#efff16"/><stop offset="0.2216" stop-color="#fffc12"/><stop offset="0.9880" stop-color="#ffc601"/><stop offset="1.0000" stop-color="#ffc501"/></linearGradient>
<clipPath id="clLocus"><path d="M1755.1 1027.4 C1755.1 1027.4 1755.1 1027.4 1755.0 1027.4 C1754.9 1027.4 1754.8 1027.5 1754.8 1027.5 C1754.7 1027.5 1754.6 1027.5 1754.5 1027.5 C1754.4 1027.5 1754.3 1027.6 1754.2 1027.6 C1754.0 1027.6 1754.0 1027.6 1753.8 1027.6 C1753.7 1027.6 1753.5 1027.6 1753.3 1027.6 C1753.2 1027.6 1753.0 1027.6 1752.8 1027.6 C1752.5 1027.5 1752.3 1027.5 1751.9 1027.3 C1751.6 1027.2 1751.1 1027.0 1750.6 1026.7 C1750.1 1026.4 1749.6 1026.1 1749.0 1025.7 C1748.3 1025.3 1747.5 1024.8 1746.6 1024.2 C1745.7 1023.6 1744.8 1022.9 1743.7 1022.1 C1742.5 1021.3 1741.3 1020.5 1739.8 1019.5 C1738.2 1018.5 1736.4 1017.3 1734.4 1016.0 C1732.5 1014.7 1730.3 1013.3 1727.8 1011.5 C1725.4 1009.7 1722.6 1007.8 1719.6 1005.2 C1716.5 1002.7 1713.4 1000.3 1709.5 996.1 C1705.6 991.9 1701.2 987.0 1696.1 980.0 C1691.0 973.0 1685.4 965.2 1678.9 954.0 C1672.5 942.8 1665.4 929.8 1657.3 912.8 C1649.3 895.8 1639.7 876.0 1630.6 851.8 C1621.6 827.5 1612.0 798.8 1603.1 767.1 C1594.2 735.4 1584.6 697.9 1577.3 661.5 C1569.9 625.1 1563.0 584.9 1559.2 548.7 C1555.3 512.5 1553.0 475.9 1554.1 444.2 C1555.2 412.5 1559.0 382.1 1565.9 358.6 C1572.8 335.1 1583.6 315.6 1595.4 303.1 C1607.3 290.6 1622.4 285.7 1637.2 283.6 C1652.1 281.4 1668.5 286.2 1684.4 290.4 C1700.2 294.6 1716.7 301.9 1732.2 308.6 C1747.7 315.3 1762.6 322.7 1777.3 330.4 C1792.1 338.1 1806.3 346.3 1820.7 354.9 C1835.0 363.5 1849.2 372.6 1863.4 381.8 C1877.6 391.1 1891.6 400.8 1905.7 410.6 C1919.8 420.3 1933.8 430.4 1947.9 440.5 C1961.9 450.7 1976.1 461.0 1990.1 471.4 C2004.2 481.8 2018.2 492.3 2032.2 502.7 C2046.1 513.2 2060.2 523.7 2074.0 534.1 C2087.8 544.4 2101.5 554.8 2115.0 565.0 C2128.4 575.2 2141.8 585.3 2154.8 595.2 C2167.8 605.0 2180.6 614.7 2192.9 624.1 C2205.3 633.4 2217.4 642.5 2228.8 651.2 C2240.2 659.8 2251.3 668.3 2261.5 676.0 C2271.7 683.8 2281.1 690.8 2290.0 697.6 C2298.9 704.3 2307.4 710.8 2315.0 716.5 C2322.7 722.3 2329.5 727.4 2335.8 732.1 C2342.1 736.9 2347.6 741.1 2352.7 745.0 C2357.8 748.8 2362.1 752.1 2366.2 755.2 C2370.2 758.3 2373.7 760.8 2376.9 763.3 C2380.1 765.7 2382.9 767.8 2385.5 769.8 C2388.2 771.8 2390.5 773.6 2392.7 775.3 C2394.9 777.0 2396.9 778.5 2398.6 779.8 C2400.4 781.1 2402.0 782.3 2403.4 783.3 C2404.7 784.3 2405.9 785.2 2406.9 786.0 C2407.9 786.8 2408.8 787.5 2409.6 788.0 C2410.4 788.6 2411.1 789.2 2411.6 789.6 C2412.2 790.0 2412.5 790.3 2412.9 790.6 C2413.3 790.9 2413.7 791.1 2414.0 791.4 C2414.3 791.6 2414.5 791.8 2414.8 792.0 C2415.1 792.2 2415.4 792.4 2415.6 792.6 C2415.9 792.8 2416.2 793.0 2416.4 793.2 C2416.6 793.3 2416.7 793.4 2416.8 793.5 C2416.9 793.6 2417.0 793.7 2417.1 793.7 C2417.1 793.7 2417.2 793.8 2417.2 793.8 Z"/></clipPath>
<clipPath id="clTri"><path d="M2352.6 744.7 L1862.5 412.6 L1726.7 978.1 Z"/></clipPath>
<clipPath id="clLocusI"><path d="M604.7 3396.5 C604.6 3396.5 604.4 3396.4 604.0 3396.5 C603.7 3396.6 603.1 3397.0 602.7 3397.1 C602.2 3397.2 601.9 3397.0 601.4 3397.1 C600.8 3397.2 600.0 3397.5 599.3 3397.6 C598.7 3397.7 598.1 3397.6 597.3 3397.6 C596.6 3397.6 595.7 3397.6 594.7 3397.6 C593.7 3397.6 592.7 3397.9 591.3 3397.6 C590.0 3397.4 588.7 3396.9 586.7 3396.0 C584.7 3395.0 582.1 3393.7 579.3 3392.0 C576.6 3390.4 573.8 3388.5 570.0 3385.9 C566.2 3383.3 561.7 3380.1 556.7 3376.4 C551.7 3372.7 546.4 3368.4 540.0 3363.5 C533.5 3358.7 526.7 3353.6 518.0 3347.3 C509.3 3341.0 499.2 3333.8 488.0 3325.5 C476.8 3317.2 464.6 3308.7 450.6 3297.5 C436.6 3286.3 421.2 3274.4 403.9 3258.4 C386.7 3242.3 369.4 3227.5 347.3 3201.3 C325.1 3175.1 300.0 3144.9 271.2 3101.2 C242.4 3057.5 211.0 3008.8 174.5 2939.0 C138.1 2869.2 98.0 2788.5 52.5 2682.3 C7.0 2576.1 -47.2 2453.3 -98.2 2302.0 C-149.2 2150.7 -203.4 1972.2 -253.6 1774.6 C-303.9 1576.9 -358.3 1343.1 -399.7 1116.3 C-441.0 889.4 -479.9 638.9 -501.7 413.2 C-523.5 187.5 -536.7 -40.4 -530.4 -237.8 C-524.0 -435.2 -502.6 -624.8 -463.7 -771.4 C-424.8 -917.9 -364.1 -1039.1 -297.0 -1117.0 C-229.8 -1195.0 -144.6 -1225.7 -60.9 -1239.0 C22.8 -1252.2 115.8 -1222.5 205.2 -1196.4 C294.6 -1170.4 387.8 -1124.5 475.3 -1082.9 C562.8 -1041.3 646.8 -995.1 730.1 -947.0 C813.3 -898.9 893.8 -847.7 974.8 -794.3 C1055.8 -740.9 1136.2 -684.3 1216.2 -626.5 C1296.3 -568.7 1375.5 -508.5 1455.0 -447.5 C1534.5 -386.6 1613.6 -323.9 1693.1 -260.7 C1772.5 -197.5 1852.5 -132.9 1931.8 -68.3 C2011.2 -3.7 2090.3 61.8 2169.2 126.9 C2248.1 191.9 2327.4 257.4 2405.3 322.1 C2483.2 386.7 2560.7 451.5 2636.7 515.0 C2712.8 578.5 2788.1 641.6 2861.5 702.9 C2934.8 764.3 3007.2 824.9 3076.9 883.0 C3146.6 941.2 3215.0 998.0 3279.6 1051.9 C3344.2 1105.9 3406.8 1158.7 3464.4 1206.9 C3521.9 1255.1 3574.7 1299.1 3625.1 1341.1 C3675.4 1383.1 3723.3 1423.2 3766.5 1459.1 C3809.6 1495.0 3848.4 1526.9 3883.8 1556.4 C3919.3 1586.0 3950.6 1612.4 3979.2 1636.4 C4007.8 1660.4 4032.4 1681.2 4055.2 1700.2 C4078.0 1719.2 4097.7 1735.3 4115.9 1750.5 C4134.1 1765.7 4149.7 1778.8 4164.6 1791.3 C4179.5 1803.8 4192.9 1815.1 4205.3 1825.5 C4217.6 1835.8 4228.6 1845.1 4238.6 1853.4 C4248.6 1861.7 4257.5 1868.8 4265.3 1875.2 C4273.1 1881.7 4279.4 1887.1 4285.3 1892.0 C4291.2 1896.9 4296.2 1901.1 4300.6 1904.9 C4305.1 1908.6 4308.9 1911.8 4312.0 1914.4 C4315.1 1917.0 4317.1 1918.7 4319.3 1920.5 C4321.5 1922.4 4323.5 1924.1 4325.3 1925.6 C4327.1 1927.1 4328.4 1928.2 4330.0 1929.5 C4331.5 1930.8 4333.2 1932.2 4334.7 1933.4 C4336.1 1934.6 4337.5 1935.8 4338.7 1936.8 C4339.8 1937.7 4340.7 1938.4 4341.3 1939.0 C4342.0 1939.5 4342.3 1939.8 4342.7 1940.1 C4343.0 1940.4 4343.2 1940.6 4343.3 1940.7 Z"/></clipPath>
<clipPath id="clTriI"><path d="M3978.5 1634.7 L1210.9 -434.7 L444.0 3088.9 Z"/></clipPath>
<clipPath id="clInset"><rect x="2198.8" y="288.8" width="333.0" height="279.99999999999994"/></clipPath>
<g id="fieldMain"><rect x="1550" y="280.00" width="870" height="10" fill="url(#fm0)"/><rect x="1550" y="280.00" width="870" height="10" fill="url(#fm1)" mask="url(#ramp)"/><rect x="1550" y="290.00" width="870" height="10" fill="url(#fm1)"/><rect x="1550" y="290.00" width="870" height="10" fill="url(#fm2)" mask="url(#ramp)"/><rect x="1550" y="300.00" width="870" height="10" fill="url(#fm2)"/><rect x="1550" y="300.00" width="870" height="10" fill="url(#fm3)" mask="url(#ramp)"/><rect x="1550" y="310.00" width="870" height="10" fill="url(#fm3)"/><rect x="1550" y="310.00" width="870" height="10" fill="url(#fm4)" mask="url(#ramp)"/><rect x="1550" y="320.00" width="870" height="10" fill="url(#fm4)"/><rect x="1550" y="320.00" width="870" height="10" fill="url(#fm5)" mask="url(#ramp)"/><rect x="1550" y="330.00" width="870" height="10" fill="url(#fm5)"/><rect x="1550" y="330.00" width="870" height="10" fill="url(#fm6)" mask="url(#ramp)"/><rect x="1550" y="340.00" width="870" height="10" fill="url(#fm6)"/><rect x="1550" y="340.00" width="870" height="10" fill="url(#fm7)" mask="url(#ramp)"/><rect x="1550" y="350.00" width="870" height="10" fill="url(#fm7)"/><rect x="1550" y="350.00" width="870" height="10" fill="url(#fm8)" mask="url(#ramp)"/><rect x="1550" y="360.00" width="870" height="10" fill="url(#fm8)"/><rect x="1550" y="360.00" width="870" height="10" fill="url(#fm9)" mask="url(#ramp)"/><rect x="1550" y="370.00" width="870" height="10" fill="url(#fm9)"/><rect x="1550" y="370.00" width="870" height="10" fill="url(#fm10)" mask="url(#ramp)"/><rect x="1550" y="380.00" width="870" height="10" fill="url(#fm10)"/><rect x="1550" y="380.00" width="870" height="10" fill="url(#fm11)" mask="url(#ramp)"/><rect x="1550" y="390.00" width="870" height="10" fill="url(#fm11)"/><rect x="1550" y="390.00" width="870" height="10" fill="url(#fm12)" mask="url(#ramp)"/><rect x="1550" y="400.00" width="870" height="10" fill="url(#fm12)"/><rect x="1550" y="400.00" width="870" height="10" fill="url(#fm13)" mask="url(#ramp)"/><rect x="1550" y="410.00" width="870" height="10" fill="url(#fm13)"/><rect x="1550" y="410.00" width="870" height="10" fill="url(#fm14)" mask="url(#ramp)"/><rect x="1550" y="420.00" width="870" height="10" fill="url(#fm14)"/><rect x="1550" y="420.00" width="870" height="10" fill="url(#fm15)" mask="url(#ramp)"/><rect x="1550" y="430.00" width="870" height="10" fill="url(#fm15)"/><rect x="1550" y="430.00" width="870" height="10" fill="url(#fm16)" mask="url(#ramp)"/><rect x="1550" y="440.00" width="870" height="10" fill="url(#fm16)"/><rect x="1550" y="440.00" width="870" height="10" fill="url(#fm17)" mask="url(#ramp)"/><rect x="1550" y="450.00" width="870" height="10" fill="url(#fm17)"/><rect x="1550" y="450.00" width="870" height="10" fill="url(#fm18)" mask="url(#ramp)"/><rect x="1550" y="460.00" width="870" height="10" fill="url(#fm18)"/><rect x="1550" y="460.00" width="870" height="10" fill="url(#fm19)" mask="url(#ramp)"/><rect x="1550" y="470.00" width="870" height="10" fill="url(#fm19)"/><rect x="1550" y="470.00" width="870" height="10" fill="url(#fm20)" mask="url(#ramp)"/><rect x="1550" y="480.00" width="870" height="10" fill="url(#fm20)"/><rect x="1550" y="480.00" width="870" height="10" fill="url(#fm21)" mask="url(#ramp)"/><rect x="1550" y="490.00" width="870" height="10" fill="url(#fm21)"/><rect x="1550" y="490.00" width="870" height="10" fill="url(#fm22)" mask="url(#ramp)"/><rect x="1550" y="500.00" width="870" height="10" fill="url(#fm22)"/><rect x="1550" y="500.00" width="870" height="10" fill="url(#fm23)" mask="url(#ramp)"/><rect x="1550" y="510.00" width="870" height="10" fill="url(#fm23)"/><rect x="1550" y="510.00" width="870" height="10" fill="url(#fm24)" mask="url(#ramp)"/><rect x="1550" y="520.00" width="870" height="10" fill="url(#fm24)"/><rect x="1550" y="520.00" width="870" height="10" fill="url(#fm25)" mask="url(#ramp)"/><rect x="1550" y="530.00" width="870" height="10" fill="url(#fm25)"/><rect x="1550" y="530.00" width="870" height="10" fill="url(#fm26)" mask="url(#ramp)"/><rect x="1550" y="540.00" width="870" height="10" fill="url(#fm26)"/><rect x="1550" y="540.00" width="870" height="10" fill="url(#fm27)" mask="url(#ramp)"/><rect x="1550" y="550.00" width="870" height="10" fill="url(#fm27)"/><rect x="1550" y="550.00" width="870" height="10" fill="url(#fm28)" mask="url(#ramp)"/><rect x="1550" y="560.00" width="870" height="10" fill="url(#fm28)"/><rect x="1550" y="560.00" width="870" height="10" fill="url(#fm29)" mask="url(#ramp)"/><rect x="1550" y="570.00" width="870" height="10" fill="url(#fm29)"/><rect x="1550" y="570.00" width="870" height="10" fill="url(#fm30)" mask="url(#ramp)"/><rect x="1550" y="580.00" width="870" height="10" fill="url(#fm30)"/><rect x="1550" y="580.00" width="870" height="10" fill="url(#fm31)" mask="url(#ramp)"/><rect x="1550" y="590.00" width="870" height="10" fill="url(#fm31)"/><rect x="1550" y="590.00" width="870" height="10" fill="url(#fm32)" mask="url(#ramp)"/><rect x="1550" y="600.00" width="870" height="10" fill="url(#fm32)"/><rect x="1550" y="600.00" width="870" height="10" fill="url(#fm33)" mask="url(#ramp)"/><rect x="1550" y="610.00" width="870" height="10" fill="url(#fm33)"/><rect x="1550" y="610.00" width="870" height="10" fill="url(#fm34)" mask="url(#ramp)"/><rect x="1550" y="620.00" width="870" height="10" fill="url(#fm34)"/><rect x="1550" y="620.00" width="870" height="10" fill="url(#fm35)" mask="url(#ramp)"/><rect x="1550" y="630.00" width="870" height="10" fill="url(#fm35)"/><rect x="1550" y="630.00" width="870" height="10" fill="url(#fm36)" mask="url(#ramp)"/><rect x="1550" y="640.00" width="870" height="10" fill="url(#fm36)"/><rect x="1550" y="640.00" width="870" height="10" fill="url(#fm37)" mask="url(#ramp)"/><rect x="1550" y="650.00" width="870" height="10" fill="url(#fm37)"/><rect x="1550" y="650.00" width="870" height="10" fill="url(#fm38)" mask="url(#ramp)"/><rect x="1550" y="660.00" width="870" height="10" fill="url(#fm38)"/><rect x="1550" y="660.00" width="870" height="10" fill="url(#fm39)" mask="url(#ramp)"/><rect x="1550" y="670.00" width="870" height="10" fill="url(#fm39)"/><rect x="1550" y="670.00" width="870" height="10" fill="url(#fm40)" mask="url(#ramp)"/><rect x="1550" y="680.00" width="870" height="10" fill="url(#fm40)"/><rect x="1550" y="680.00" width="870" height="10" fill="url(#fm41)" mask="url(#ramp)"/><rect x="1550" y="690.00" width="870" height="10" fill="url(#fm41)"/><rect x="1550" y="690.00" width="870" height="10" fill="url(#fm42)" mask="url(#ramp)"/><rect x="1550" y="700.00" width="870" height="10" fill="url(#fm42)"/><rect x="1550" y="700.00" width="870" height="10" fill="url(#fm43)" mask="url(#ramp)"/><rect x="1550" y="710.00" width="870" height="10" fill="url(#fm43)"/><rect x="1550" y="710.00" width="870" height="10" fill="url(#fm44)" mask="url(#ramp)"/><rect x="1550" y="720.00" width="870" height="10" fill="url(#fm44)"/><rect x="1550" y="720.00" width="870" height="10" fill="url(#fm45)" mask="url(#ramp)"/><rect x="1550" y="730.00" width="870" height="10" fill="url(#fm45)"/><rect x="1550" y="730.00" width="870" height="10" fill="url(#fm46)" mask="url(#ramp)"/><rect x="1550" y="740.00" width="870" height="10" fill="url(#fm46)"/><rect x="1550" y="740.00" width="870" height="10" fill="url(#fm47)" mask="url(#ramp)"/><rect x="1550" y="750.00" width="870" height="10" fill="url(#fm47)"/><rect x="1550" y="750.00" width="870" height="10" fill="url(#fm48)" mask="url(#ramp)"/><rect x="1550" y="760.00" width="870" height="10" fill="url(#fm48)"/><rect x="1550" y="760.00" width="870" height="10" fill="url(#fm49)" mask="url(#ramp)"/><rect x="1550" y="770.00" width="870" height="10" fill="url(#fm49)"/><rect x="1550" y="770.00" width="870" height="10" fill="url(#fm50)" mask="url(#ramp)"/><rect x="1550" y="780.00" width="870" height="10" fill="url(#fm50)"/><rect x="1550" y="780.00" width="870" height="10" fill="url(#fm51)" mask="url(#ramp)"/><rect x="1550" y="790.00" width="870" height="10" fill="url(#fm51)"/><rect x="1550" y="790.00" width="870" height="10" fill="url(#fm52)" mask="url(#ramp)"/><rect x="1550" y="800.00" width="870" height="10" fill="url(#fm52)"/><rect x="1550" y="800.00" width="870" height="10" fill="url(#fm53)" mask="url(#ramp)"/><rect x="1550" y="810.00" width="870" height="10" fill="url(#fm53)"/><rect x="1550" y="810.00" width="870" height="10" fill="url(#fm54)" mask="url(#ramp)"/><rect x="1550" y="820.00" width="870" height="10" fill="url(#fm54)"/><rect x="1550" y="820.00" width="870" height="10" fill="url(#fm55)" mask="url(#ramp)"/><rect x="1550" y="830.00" width="870" height="10" fill="url(#fm55)"/><rect x="1550" y="830.00" width="870" height="10" fill="url(#fm56)" mask="url(#ramp)"/><rect x="1550" y="840.00" width="870" height="10" fill="url(#fm56)"/><rect x="1550" y="840.00" width="870" height="10" fill="url(#fm57)" mask="url(#ramp)"/><rect x="1550" y="850.00" width="870" height="10" fill="url(#fm57)"/><rect x="1550" y="850.00" width="870" height="10" fill="url(#fm58)" mask="url(#ramp)"/><rect x="1550" y="860.00" width="870" height="10" fill="url(#fm58)"/><rect x="1550" y="860.00" width="870" height="10" fill="url(#fm59)" mask="url(#ramp)"/><rect x="1550" y="870.00" width="870" height="10" fill="url(#fm59)"/><rect x="1550" y="870.00" width="870" height="10" fill="url(#fm60)" mask="url(#ramp)"/><rect x="1550" y="880.00" width="870" height="10" fill="url(#fm60)"/><rect x="1550" y="880.00" width="870" height="10" fill="url(#fm61)" mask="url(#ramp)"/><rect x="1550" y="890.00" width="870" height="10" fill="url(#fm61)"/><rect x="1550" y="890.00" width="870" height="10" fill="url(#fm62)" mask="url(#ramp)"/><rect x="1550" y="900.00" width="870" height="10" fill="url(#fm62)"/><rect x="1550" y="900.00" width="870" height="10" fill="url(#fm63)" mask="url(#ramp)"/><rect x="1550" y="910.00" width="870" height="10" fill="url(#fm63)"/><rect x="1550" y="910.00" width="870" height="10" fill="url(#fm64)" mask="url(#ramp)"/><rect x="1550" y="920.00" width="870" height="10" fill="url(#fm64)"/><rect x="1550" y="920.00" width="870" height="10" fill="url(#fm65)" mask="url(#ramp)"/><rect x="1550" y="930.00" width="870" height="10" fill="url(#fm65)"/><rect x="1550" y="930.00" width="870" height="10" fill="url(#fm66)" mask="url(#ramp)"/><rect x="1550" y="940.00" width="870" height="10" fill="url(#fm66)"/><rect x="1550" y="940.00" width="870" height="10" fill="url(#fm67)" mask="url(#ramp)"/><rect x="1550" y="950.00" width="870" height="10" fill="url(#fm67)"/><rect x="1550" y="950.00" width="870" height="10" fill="url(#fm68)" mask="url(#ramp)"/><rect x="1550" y="960.00" width="870" height="10" fill="url(#fm68)"/><rect x="1550" y="960.00" width="870" height="10" fill="url(#fm69)" mask="url(#ramp)"/><rect x="1550" y="970.00" width="870" height="10" fill="url(#fm69)"/><rect x="1550" y="970.00" width="870" height="10" fill="url(#fm70)" mask="url(#ramp)"/><rect x="1550" y="980.00" width="870" height="10" fill="url(#fm70)"/><rect x="1550" y="980.00" width="870" height="10" fill="url(#fm71)" mask="url(#ramp)"/><rect x="1550" y="990.00" width="870" height="10" fill="url(#fm71)"/><rect x="1550" y="990.00" width="870" height="10" fill="url(#fm72)" mask="url(#ramp)"/><rect x="1550" y="1000.00" width="870" height="10" fill="url(#fm72)"/><rect x="1550" y="1000.00" width="870" height="10" fill="url(#fm73)" mask="url(#ramp)"/><rect x="1550" y="1010.00" width="870" height="10" fill="url(#fm73)"/><rect x="1550" y="1010.00" width="870" height="10" fill="url(#fm74)" mask="url(#ramp)"/><rect x="1550" y="1020.00" width="870" height="10" fill="url(#fm74)"/><rect x="1550" y="1020.00" width="870" height="10" fill="url(#fm75)" mask="url(#ramp)"/></g>
<g id="fieldInset"><rect x="2198" y="288.00" width="334" height="8" fill="url(#fi0)"/><rect x="2198" y="288.00" width="334" height="8" fill="url(#fi1)" mask="url(#ramp)"/><rect x="2198" y="296.00" width="334" height="8" fill="url(#fi1)"/><rect x="2198" y="296.00" width="334" height="8" fill="url(#fi2)" mask="url(#ramp)"/><rect x="2198" y="304.00" width="334" height="8" fill="url(#fi2)"/><rect x="2198" y="304.00" width="334" height="8" fill="url(#fi3)" mask="url(#ramp)"/><rect x="2198" y="312.00" width="334" height="8" fill="url(#fi3)"/><rect x="2198" y="312.00" width="334" height="8" fill="url(#fi4)" mask="url(#ramp)"/><rect x="2198" y="320.00" width="334" height="8" fill="url(#fi4)"/><rect x="2198" y="320.00" width="334" height="8" fill="url(#fi5)" mask="url(#ramp)"/><rect x="2198" y="328.00" width="334" height="8" fill="url(#fi5)"/><rect x="2198" y="328.00" width="334" height="8" fill="url(#fi6)" mask="url(#ramp)"/><rect x="2198" y="336.00" width="334" height="8" fill="url(#fi6)"/><rect x="2198" y="336.00" width="334" height="8" fill="url(#fi7)" mask="url(#ramp)"/><rect x="2198" y="344.00" width="334" height="8" fill="url(#fi7)"/><rect x="2198" y="344.00" width="334" height="8" fill="url(#fi8)" mask="url(#ramp)"/><rect x="2198" y="352.00" width="334" height="8" fill="url(#fi8)"/><rect x="2198" y="352.00" width="334" height="8" fill="url(#fi9)" mask="url(#ramp)"/><rect x="2198" y="360.00" width="334" height="8" fill="url(#fi9)"/><rect x="2198" y="360.00" width="334" height="8" fill="url(#fi10)" mask="url(#ramp)"/><rect x="2198" y="368.00" width="334" height="8" fill="url(#fi10)"/><rect x="2198" y="368.00" width="334" height="8" fill="url(#fi11)" mask="url(#ramp)"/><rect x="2198" y="376.00" width="334" height="8" fill="url(#fi11)"/><rect x="2198" y="376.00" width="334" height="8" fill="url(#fi12)" mask="url(#ramp)"/><rect x="2198" y="384.00" width="334" height="8" fill="url(#fi12)"/><rect x="2198" y="384.00" width="334" height="8" fill="url(#fi13)" mask="url(#ramp)"/><rect x="2198" y="392.00" width="334" height="8" fill="url(#fi13)"/><rect x="2198" y="392.00" width="334" height="8" fill="url(#fi14)" mask="url(#ramp)"/><rect x="2198" y="400.00" width="334" height="8" fill="url(#fi14)"/><rect x="2198" y="400.00" width="334" height="8" fill="url(#fi15)" mask="url(#ramp)"/><rect x="2198" y="408.00" width="334" height="8" fill="url(#fi15)"/><rect x="2198" y="408.00" width="334" height="8" fill="url(#fi16)" mask="url(#ramp)"/><rect x="2198" y="416.00" width="334" height="8" fill="url(#fi16)"/><rect x="2198" y="416.00" width="334" height="8" fill="url(#fi17)" mask="url(#ramp)"/><rect x="2198" y="424.00" width="334" height="8" fill="url(#fi17)"/><rect x="2198" y="424.00" width="334" height="8" fill="url(#fi18)" mask="url(#ramp)"/><rect x="2198" y="432.00" width="334" height="8" fill="url(#fi18)"/><rect x="2198" y="432.00" width="334" height="8" fill="url(#fi19)" mask="url(#ramp)"/><rect x="2198" y="440.00" width="334" height="8" fill="url(#fi19)"/><rect x="2198" y="440.00" width="334" height="8" fill="url(#fi20)" mask="url(#ramp)"/><rect x="2198" y="448.00" width="334" height="8" fill="url(#fi20)"/><rect x="2198" y="448.00" width="334" height="8" fill="url(#fi21)" mask="url(#ramp)"/><rect x="2198" y="456.00" width="334" height="8" fill="url(#fi21)"/><rect x="2198" y="456.00" width="334" height="8" fill="url(#fi22)" mask="url(#ramp)"/><rect x="2198" y="464.00" width="334" height="8" fill="url(#fi22)"/><rect x="2198" y="464.00" width="334" height="8" fill="url(#fi23)" mask="url(#ramp)"/><rect x="2198" y="472.00" width="334" height="8" fill="url(#fi23)"/><rect x="2198" y="472.00" width="334" height="8" fill="url(#fi24)" mask="url(#ramp)"/><rect x="2198" y="480.00" width="334" height="8" fill="url(#fi24)"/><rect x="2198" y="480.00" width="334" height="8" fill="url(#fi25)" mask="url(#ramp)"/><rect x="2198" y="488.00" width="334" height="8" fill="url(#fi25)"/><rect x="2198" y="488.00" width="334" height="8" fill="url(#fi26)" mask="url(#ramp)"/><rect x="2198" y="496.00" width="334" height="8" fill="url(#fi26)"/><rect x="2198" y="496.00" width="334" height="8" fill="url(#fi27)" mask="url(#ramp)"/><rect x="2198" y="504.00" width="334" height="8" fill="url(#fi27)"/><rect x="2198" y="504.00" width="334" height="8" fill="url(#fi28)" mask="url(#ramp)"/><rect x="2198" y="512.00" width="334" height="8" fill="url(#fi28)"/><rect x="2198" y="512.00" width="334" height="8" fill="url(#fi29)" mask="url(#ramp)"/><rect x="2198" y="520.00" width="334" height="8" fill="url(#fi29)"/><rect x="2198" y="520.00" width="334" height="8" fill="url(#fi30)" mask="url(#ramp)"/><rect x="2198" y="528.00" width="334" height="8" fill="url(#fi30)"/><rect x="2198" y="528.00" width="334" height="8" fill="url(#fi31)" mask="url(#ramp)"/><rect x="2198" y="536.00" width="334" height="8" fill="url(#fi31)"/><rect x="2198" y="536.00" width="334" height="8" fill="url(#fi32)" mask="url(#ramp)"/><rect x="2198" y="544.00" width="334" height="8" fill="url(#fi32)"/><rect x="2198" y="544.00" width="334" height="8" fill="url(#fi33)" mask="url(#ramp)"/><rect x="2198" y="552.00" width="334" height="8" fill="url(#fi33)"/><rect x="2198" y="552.00" width="334" height="8" fill="url(#fi34)" mask="url(#ramp)"/><rect x="2198" y="560.00" width="334" height="8" fill="url(#fi34)"/><rect x="2198" y="560.00" width="334" height="8" fill="url(#fi35)" mask="url(#ramp)"/></g>
</defs>
<g clip-path="url(#clLocus)"><use href="#fieldMain"/><rect x="1500" y="200" width="1100" height="900" fill="#000" opacity="0.4"/></g>
<g clip-path="url(#clTri)"><use href="#fieldMain"/></g>
<path d="M1549.5 276.8 H2542 V1031.5" fill="none" stroke="#9a9a9a" stroke-width="2"/>
<path d="M1549.5 275.8 V1031.5 H2543" fill="none" stroke="#b4b4b4" stroke-width="2"/>
<path d="M1549.5 1031.5 V1041.0" stroke="#b4b4b4" stroke-width="1.8"/>
<text x="1549.5" y="1064.6" font-size="21.6" fill="#d8d8d8" text-anchor="middle">0</text>
<path d="M1667.6 1031.5 V1041.0" stroke="#b4b4b4" stroke-width="1.8"/>
<text x="1667.6" y="1064.6" font-size="21.6" fill="#d8d8d8" text-anchor="middle">0,1</text>
<path d="M1785.7 1031.5 V1041.0" stroke="#b4b4b4" stroke-width="1.8"/>
<text x="1785.7" y="1064.6" font-size="21.6" fill="#d8d8d8" text-anchor="middle">0,2</text>
<path d="M1903.8 1031.5 V1041.0" stroke="#b4b4b4" stroke-width="1.8"/>
<text x="1903.8" y="1064.6" font-size="21.6" fill="#d8d8d8" text-anchor="middle">0,3</text>
<path d="M2021.9 1031.5 V1041.0" stroke="#b4b4b4" stroke-width="1.8"/>
<text x="2021.9" y="1064.6" font-size="21.6" fill="#d8d8d8" text-anchor="middle">0,4</text>
<path d="M2140.0 1031.5 V1041.0" stroke="#b4b4b4" stroke-width="1.8"/>
<text x="2140.0" y="1064.6" font-size="21.6" fill="#d8d8d8" text-anchor="middle">0,5</text>
<path d="M2258.1 1031.5 V1041.0" stroke="#b4b4b4" stroke-width="1.8"/>
<text x="2258.1" y="1064.6" font-size="21.6" fill="#d8d8d8" text-anchor="middle">0,6</text>
<path d="M2376.2 1031.5 V1041.0" stroke="#b4b4b4" stroke-width="1.8"/>
<text x="2376.2" y="1064.6" font-size="21.6" fill="#d8d8d8" text-anchor="middle">0,7</text>
<path d="M2494.3 1031.5 V1041.0" stroke="#b4b4b4" stroke-width="1.8"/>
<text x="2494.3" y="1064.6" font-size="21.6" fill="#d8d8d8" text-anchor="middle">0,8</text>
<path d="M1541.0 1031.9 H1549.5" stroke="#b4b4b4" stroke-width="1.8"/>
<text x="1539.6" y="1039.7" font-size="21.6" fill="#d8d8d8" text-anchor="end">0</text>
<path d="M1541.0 942.2 H1549.5" stroke="#b4b4b4" stroke-width="1.8"/>
<text x="1539.6" y="950.0" font-size="21.6" fill="#d8d8d8" text-anchor="end">0,1</text>
<path d="M1541.0 852.4 H1549.5" stroke="#b4b4b4" stroke-width="1.8"/>
<text x="1539.6" y="860.2" font-size="21.6" fill="#d8d8d8" text-anchor="end">0,2</text>
<path d="M1541.0 762.7 H1549.5" stroke="#b4b4b4" stroke-width="1.8"/>
<text x="1539.6" y="770.5" font-size="21.6" fill="#d8d8d8" text-anchor="end">0,3</text>
<path d="M1541.0 672.9 H1549.5" stroke="#b4b4b4" stroke-width="1.8"/>
<text x="1539.6" y="680.7" font-size="21.6" fill="#d8d8d8" text-anchor="end">0,4</text>
<path d="M1541.0 583.2 H1549.5" stroke="#b4b4b4" stroke-width="1.8"/>
<text x="1539.6" y="591.0" font-size="21.6" fill="#d8d8d8" text-anchor="end">0,5</text>
<path d="M1541.0 493.4 H1549.5" stroke="#b4b4b4" stroke-width="1.8"/>
<text x="1539.6" y="501.2" font-size="21.6" fill="#d8d8d8" text-anchor="end">0,6</text>
<path d="M1541.0 403.7 H1549.5" stroke="#b4b4b4" stroke-width="1.8"/>
<text x="1539.6" y="411.5" font-size="21.6" fill="#d8d8d8" text-anchor="end">0,7</text>
<path d="M1541.0 313.9 H1549.5" stroke="#b4b4b4" stroke-width="1.8"/>
<text x="1539.6" y="321.7" font-size="21.6" fill="#d8d8d8" text-anchor="end">0,8</text>
<text x="2026.5" y="270.0" font-size="22.5" fill="#d8d8d8" text-anchor="middle" textLength="115.3" lengthAdjust="spacingAndGlyphs">CIE 1931 xy</text>
<rect x="2193" y="282.5" width="343.4" height="291.6" fill="#333"/>
<rect x="2198.8" y="288.8" width="333.0" height="279.99999999999994" fill="#232323"/>
<g clip-path="url(#clInset)">
<g clip-path="url(#clLocusI)"><use href="#fieldInset"/><rect x="2190" y="280" width="350" height="300" fill="#000" opacity="0.4"/></g>
<g clip-path="url(#clTriI)"><use href="#fieldInset"/></g>
</g>
<rect x="2198.8" y="288.8" width="333.0" height="279.99999999999994" fill="none" stroke="#a8a8a8" stroke-width="2"/>
<rect x="1852.0" y="399.9" width="20.4" height="20.4" fill="none" stroke="#ffffff" stroke-width="2.2"/>
<rect x="1862.9" y="470.7" width="20.4" height="20.4" fill="none" stroke="#ffffff" stroke-width="2.2"/>
<rect x="1875.1" y="531.2" width="20.4" height="20.4" fill="none" stroke="#ffffff" stroke-width="2.2"/>
<rect x="1886.0" y="594.3" width="20.4" height="20.4" fill="none" stroke="#ffffff" stroke-width="2.2"/>
<rect x="1895.9" y="658.3" width="20.4" height="20.4" fill="none" stroke="#ffffff" stroke-width="2.2"/>
<rect x="2056.5" y="537.9" width="20.4" height="20.4" fill="none" stroke="#ffffff" stroke-width="2.2"/>
<rect x="2025.3" y="576.9" width="20.4" height="20.4" fill="none" stroke="#ffffff" stroke-width="2.2"/>
<rect x="1994.0" y="614.9" width="20.4" height="20.4" fill="none" stroke="#ffffff" stroke-width="2.2"/>
<rect x="1967.2" y="650.1" width="20.4" height="20.4" fill="none" stroke="#ffffff" stroke-width="2.2"/>
<rect x="1937.4" y="685.4" width="20.4" height="20.4" fill="none" stroke="#ffffff" stroke-width="2.2"/>
<rect x="1774.9" y="722.2" width="20.4" height="20.4" fill="none" stroke="#ffffff" stroke-width="2.2"/>
<rect x="1802.1" y="723.2" width="20.4" height="20.4" fill="none" stroke="#ffffff" stroke-width="2.2"/>
<rect x="1827.6" y="723.2" width="20.4" height="20.4" fill="none" stroke="#ffffff" stroke-width="2.2"/>
<rect x="1854.8" y="723.2" width="20.4" height="20.4" fill="none" stroke="#ffffff" stroke-width="2.2"/>
<rect x="1881.3" y="723.2" width="20.4" height="20.4" fill="none" stroke="#ffffff" stroke-width="2.2"/>
<rect x="1935.9" y="884.2" width="20.4" height="20.4" fill="none" stroke="#ffffff" stroke-width="2.2"/>
<rect x="1929.2" y="850.3" width="20.4" height="20.4" fill="none" stroke="#ffffff" stroke-width="2.2"/>
<rect x="1925.2" y="819.4" width="20.4" height="20.4" fill="none" stroke="#ffffff" stroke-width="2.2"/>
<rect x="1918.5" y="788.0" width="20.4" height="20.4" fill="none" stroke="#ffffff" stroke-width="2.2"/>
<rect x="1912.9" y="756.7" width="20.4" height="20.4" fill="none" stroke="#ffffff" stroke-width="2.2"/>
<rect x="1714.3" y="965.3" width="20.4" height="20.4" fill="none" stroke="#ffffff" stroke-width="2.2"/>
<rect x="1756.1" y="915.1" width="20.4" height="20.4" fill="none" stroke="#ffffff" stroke-width="2.2"/>
<rect x="1794.2" y="867.9" width="20.4" height="20.4" fill="none" stroke="#ffffff" stroke-width="2.2"/>
<rect x="1831.8" y="821.9" width="20.4" height="20.4" fill="none" stroke="#ffffff" stroke-width="2.2"/>
<rect x="1868.8" y="771.7" width="20.4" height="20.4" fill="none" stroke="#ffffff" stroke-width="2.2"/>
<rect x="2343.1" y="731.4" width="20.4" height="20.4" fill="none" stroke="#ffffff" stroke-width="2.2"/>
<rect x="2244.4" y="731.4" width="20.4" height="20.4" fill="none" stroke="#ffffff" stroke-width="2.2"/>
<rect x="2165.7" y="730.1" width="20.4" height="20.4" fill="none" stroke="#ffffff" stroke-width="2.2"/>
<rect x="2075.4" y="727.4" width="20.4" height="20.4" fill="none" stroke="#ffffff" stroke-width="2.2"/>
<rect x="1994.1" y="725.5" width="20.4" height="20.4" fill="none" stroke="#ffffff" stroke-width="2.2"/>
<rect x="1908.7" y="725.8" width="20.4" height="20.4" fill="none" stroke="#000" stroke-width="2.6"/>
<circle cx="1837.4" cy="391.3" r="5.9" fill="#10b410" stroke="#111" stroke-width="1.9"/>
<circle cx="1854.3" cy="460.3" r="5.9" fill="#4eae4e" stroke="#111" stroke-width="1.9"/>
<circle cx="1870.7" cy="529.3" r="5.9" fill="#6cb06c" stroke="#111" stroke-width="1.9"/>
<circle cx="1888.0" cy="598.3" r="5.9" fill="#88b488" stroke="#111" stroke-width="1.9"/>
<circle cx="1904.4" cy="664.3" r="5.9" fill="#a2bca2" stroke="#111" stroke-width="1.9"/>
<circle cx="2062.8" cy="545.7" r="5.9" fill="#c4bc00" stroke="#111" stroke-width="1.9"/>
<circle cx="2033.7" cy="581.1" r="5.9" fill="#bcb860" stroke="#111" stroke-width="1.9"/>
<circle cx="2002.2" cy="621.1" r="5.9" fill="#b8b680" stroke="#111" stroke-width="1.9"/>
<circle cx="1973.2" cy="658.6" r="5.9" fill="#bcb898" stroke="#111" stroke-width="1.9"/>
<circle cx="1947.6" cy="691.6" r="5.9" fill="#c0bcaa" stroke="#111" stroke-width="1.9"/>
<circle cx="1768.8" cy="723.0" r="5.9" fill="#12c0c0" stroke="#111" stroke-width="1.9"/>
<circle cx="1801.9" cy="725.5" r="5.9" fill="#5cb4b4" stroke="#111" stroke-width="1.9"/>
<circle cx="1833.6" cy="725.5" r="5.9" fill="#7ab4b4" stroke="#111" stroke-width="1.9"/>
<circle cx="1862.5" cy="727.6" r="5.9" fill="#90b6b6" stroke="#111" stroke-width="1.9"/>
<circle cx="1889.7" cy="727.6" r="5.9" fill="#a8bcbc" stroke="#111" stroke-width="1.9"/>
<circle cx="1958.6" cy="896.5" r="5.9" fill="#c000c0" stroke="#111" stroke-width="1.9"/>
<circle cx="1950.5" cy="861.0" r="5.9" fill="#c050c0" stroke="#111" stroke-width="1.9"/>
<circle cx="1942.1" cy="825.4" r="5.9" fill="#c070c0" stroke="#111" stroke-width="1.9"/>
<circle cx="1933.3" cy="792.0" r="5.9" fill="#c090c0" stroke="#111" stroke-width="1.9"/>
<circle cx="1924.8" cy="760.6" r="5.9" fill="#b8a0b8" stroke="#111" stroke-width="1.9"/>
<circle cx="1714.5" cy="990.6" r="5.9" fill="#0000cc" stroke="#111" stroke-width="1.9"/>
<circle cx="1755.7" cy="934.1" r="5.9" fill="#4848c0" stroke="#111" stroke-width="1.9"/>
<circle cx="1801.9" cy="877.7" r="5.9" fill="#6262b0" stroke="#111" stroke-width="1.9"/>
<circle cx="1843.7" cy="825.4" r="5.9" fill="#8a8ab8" stroke="#111" stroke-width="1.9"/>
<circle cx="1881.1" cy="777.8" r="5.9" fill="#a4a4b8" stroke="#111" stroke-width="1.9"/>
<circle cx="2352.7" cy="744.0" r="5.9" fill="#cc0000" stroke="#111" stroke-width="1.9"/>
<circle cx="2269.2" cy="742.1" r="5.9" fill="#c04444" stroke="#111" stroke-width="1.9"/>
<circle cx="2188.3" cy="737.6" r="5.9" fill="#c06060" stroke="#111" stroke-width="1.9"/>
<circle cx="2089.6" cy="733.4" r="5.9" fill="#c08080" stroke="#111" stroke-width="1.9"/>
<circle cx="2004.7" cy="732.1" r="5.9" fill="#c09a9a" stroke="#111" stroke-width="1.9"/>
<circle cx="1918.9" cy="729.3" r="5.9" fill="#ffffff" stroke="#111" stroke-width="1.9"/>
<rect x="2353.1" y="417" width="20.4" height="20.4" fill="none" stroke="#ffffff" stroke-width="2.2"/>
<circle cx="2342.4" cy="406.9" r="5.9" fill="#c4bc00" stroke="#111" stroke-width="1.9"/>
<text x="23.9" y="1177.0" font-size="46" fill="#f2f2f2" textLength="335" lengthAdjust="spacingAndGlyphs">Current Reading</text>
<text x="23.9" y="1241.5" font-size="36.5" fill="#f2f2f2" textLength="156.3" lengthAdjust="spacingAndGlyphs">x: 0,4346</text>
<text x="23.9" y="1304.0" font-size="36.5" fill="#f2f2f2" textLength="156.3" lengthAdjust="spacingAndGlyphs">y: 0,5397</text>
<text x="23.9" y="1366.5" font-size="36.5" fill="#f2f2f2" textLength="147.5" lengthAdjust="spacingAndGlyphs">fL: 71,46</text>
<text x="23.9" y="1429.0" font-size="36.5" fill="#f2f2f2" textLength="242.4" lengthAdjust="spacingAndGlyphs">cd/m²: 244,83</text>
<rect x="548.2" y="1145" width="382.79999999999995" height="276" fill="#232323"/>
<path d="M548.2 1173.4 H931" stroke="#9a9a9a" stroke-width="1.8"/>
<path d="M539.2 1173.4 H548.2" stroke="#b0b0b0" stroke-width="1.8"/>
<text x="538.7" y="1181.2" font-size="21.6" fill="#d8d8d8" text-anchor="end">104</text>
<path d="M548.2 1229.0 H931" stroke="#9a9a9a" stroke-width="1.8"/>
<path d="M539.2 1229.0 H548.2" stroke="#b0b0b0" stroke-width="1.8"/>
<text x="538.7" y="1236.8" font-size="21.6" fill="#d8d8d8" text-anchor="end">102</text>
<path d="M548.2 1284.6 H931" stroke="#9a9a9a" stroke-width="1.8"/>
<path d="M539.2 1284.6 H548.2" stroke="#b0b0b0" stroke-width="1.8"/>
<text x="538.7" y="1292.4" font-size="21.6" fill="#d8d8d8" text-anchor="end">100</text>
<path d="M548.2 1340.2 H931" stroke="#9a9a9a" stroke-width="1.8"/>
<path d="M539.2 1340.2 H548.2" stroke="#b0b0b0" stroke-width="1.8"/>
<text x="538.7" y="1348.0" font-size="21.6" fill="#d8d8d8" text-anchor="end">98</text>
<path d="M548.2 1395.8 H931" stroke="#9a9a9a" stroke-width="1.8"/>
<path d="M539.2 1395.8 H548.2" stroke="#b0b0b0" stroke-width="1.8"/>
<text x="538.7" y="1403.6" font-size="21.6" fill="#d8d8d8" text-anchor="end">96</text>
<path d="M548.2 1145 H931 V1421" fill="none" stroke="#9a9a9a" stroke-width="2"/>
<path d="M548.2 1144 V1421 H932" fill="none" stroke="#b0b0b0" stroke-width="2"/>
<path d="M548.2 1421 V1430 M931 1421 V1430" stroke="#b0b0b0" stroke-width="2"/>
<text x="716.7" y="1137.9" font-size="22.4" fill="#d8d8d8" text-anchor="middle" textLength="125.6" lengthAdjust="spacingAndGlyphs">RGB Balance</text>
<text x="739.6" y="1446.9" font-size="21.8" fill="#d8d8d8" text-anchor="middle">100%</text>
<rect x="584.0" y="1266.8" width="102.3" height="154.2" fill="#000"/>
<rect x="586.5" y="1269.5" width="97.3" height="151.5" fill="url(#rgbR)"/>
<rect x="686.5" y="1236.1" width="102.3" height="184.9" fill="#000"/>
<rect x="689.0" y="1238.8" width="97.3" height="182.2" fill="url(#rgbG)"/>
<rect x="789.0" y="1303.8" width="102.3" height="117.2" fill="#000"/>
<rect x="791.5" y="1306.5" width="97.3" height="114.5" fill="url(#rgbB)"/>
<rect x="962.5" y="1107.5" width="1118.5" height="310.5" fill="#0c0c0c"/>
<rect x="965.5" y="1109.5" width="1112.0" height="47.5" fill="url(#hdrg)"/>
<rect x="965.5" y="1157.0" width="1112.0" height="43.57" fill="url(#rowD)"/>
<rect x="965.5" y="1200.6" width="1112.0" height="43.57" fill="url(#rowL)"/>
<rect x="965.5" y="1244.1" width="1112.0" height="43.57" fill="url(#rowD)"/>
<rect x="965.5" y="1287.7" width="1112.0" height="43.57" fill="url(#rowL)"/>
<rect x="965.5" y="1331.3" width="1112.0" height="43.57" fill="url(#rowD)"/>
<rect x="965.5" y="1374.8" width="1112.0" height="43.57" fill="url(#rowL)"/>
<text x="1344.0" y="1143.0" font-size="25.5" fill="#f4f4f4" text-anchor="middle" textLength="60" lengthAdjust="spacingAndGlyphs">20%</text>
<text x="1507.0" y="1143.0" font-size="25.5" fill="#f4f4f4" text-anchor="middle" textLength="60" lengthAdjust="spacingAndGlyphs">40%</text>
<text x="1670.0" y="1143.0" font-size="25.5" fill="#f4f4f4" text-anchor="middle" textLength="60" lengthAdjust="spacingAndGlyphs">60%</text>
<text x="1833.0" y="1143.0" font-size="25.5" fill="#f4f4f4" text-anchor="middle" textLength="60" lengthAdjust="spacingAndGlyphs">80%</text>
<text x="1996.6" y="1143.0" font-size="25.5" fill="#f4f4f4" text-anchor="middle" textLength="75" lengthAdjust="spacingAndGlyphs">100%</text>
<text x="992.5" y="1188.8" font-size="26.5" fill="#f2f2f2" font-weight="bold" textLength="130.8" lengthAdjust="spacingAndGlyphs">x: CIE31</text>
<text x="1272.6" y="1188.8" font-size="26" fill="#f2f2f2" textLength="103.7" lengthAdjust="spacingAndGlyphs">0,3376</text>
<text x="1435.5" y="1188.8" font-size="26" fill="#f2f2f2" textLength="103.7" lengthAdjust="spacingAndGlyphs">0,3598</text>
<text x="1598.5" y="1188.8" font-size="26" fill="#f2f2f2" textLength="103.7" lengthAdjust="spacingAndGlyphs">0,3843</text>
<text x="1761.6" y="1188.8" font-size="26" fill="#f2f2f2" textLength="103.7" lengthAdjust="spacingAndGlyphs">0,4100</text>
<text x="1924.4" y="1188.8" font-size="26" fill="#f2f2f2" textLength="103.7" lengthAdjust="spacingAndGlyphs">0,4346</text>
<text x="992.5" y="1232.4" font-size="26.5" fill="#f2f2f2" font-weight="bold" textLength="130.8" lengthAdjust="spacingAndGlyphs">y: CIE31</text>
<text x="1272.6" y="1232.4" font-size="26" fill="#f2f2f2" textLength="103.7" lengthAdjust="spacingAndGlyphs">0,3772</text>
<text x="1435.5" y="1232.4" font-size="26" fill="#f2f2f2" textLength="103.7" lengthAdjust="spacingAndGlyphs">0,4143</text>
<text x="1598.5" y="1232.4" font-size="26" fill="#f2f2f2" textLength="103.7" lengthAdjust="spacingAndGlyphs">0,4555</text>
<text x="1761.6" y="1232.4" font-size="26" fill="#f2f2f2" textLength="103.7" lengthAdjust="spacingAndGlyphs">0,4986</text>
<text x="1924.4" y="1232.4" font-size="26" fill="#f2f2f2" textLength="103.7" lengthAdjust="spacingAndGlyphs">0,5397</text>
<text x="992.5" y="1275.9" font-size="26.5" fill="#f2f2f2" font-weight="bold">Y</text>
<text x="1272.6" y="1275.9" font-size="26" fill="#f2f2f2" textLength="141.5" lengthAdjust="spacingAndGlyphs">253,5117</text>
<text x="1435.5" y="1275.9" font-size="26" fill="#f2f2f2" textLength="141.5" lengthAdjust="spacingAndGlyphs">250,0324</text>
<text x="1598.5" y="1275.9" font-size="26" fill="#f2f2f2" textLength="141.5" lengthAdjust="spacingAndGlyphs">247,4605</text>
<text x="1761.6" y="1275.9" font-size="26" fill="#f2f2f2" textLength="141.5" lengthAdjust="spacingAndGlyphs">245,1182</text>
<text x="1924.4" y="1275.9" font-size="26" fill="#f2f2f2" textLength="141.5" lengthAdjust="spacingAndGlyphs">244,8305</text>
<text x="992.5" y="1319.5" font-size="26.5" fill="#f2f2f2" font-weight="bold" textLength="238.8" lengthAdjust="spacingAndGlyphs">Target x:CIE31</text>
<text x="1272.6" y="1319.5" font-size="26" fill="#f2f2f2" textLength="103.7" lengthAdjust="spacingAndGlyphs">0,3386</text>
<text x="1435.5" y="1319.5" font-size="26" fill="#f2f2f2" textLength="103.7" lengthAdjust="spacingAndGlyphs">0,3620</text>
<text x="1598.5" y="1319.5" font-size="26" fill="#f2f2f2" textLength="103.7" lengthAdjust="spacingAndGlyphs">0,3865</text>
<text x="1761.6" y="1319.5" font-size="26" fill="#f2f2f2" textLength="103.7" lengthAdjust="spacingAndGlyphs">0,4114</text>
<text x="1924.4" y="1319.5" font-size="26" fill="#f2f2f2" textLength="103.7" lengthAdjust="spacingAndGlyphs">0,4378</text>
<text x="992.5" y="1363.1" font-size="26.5" fill="#f2f2f2" font-weight="bold" textLength="238.8" lengthAdjust="spacingAndGlyphs">Target y:CIE31</text>
<text x="1272.6" y="1363.1" font-size="26" fill="#f2f2f2" textLength="103.7" lengthAdjust="spacingAndGlyphs">0,3718</text>
<text x="1435.5" y="1363.1" font-size="26" fill="#f2f2f2" textLength="103.7" lengthAdjust="spacingAndGlyphs">0,4105</text>
<text x="1598.5" y="1363.1" font-size="26" fill="#f2f2f2" textLength="103.7" lengthAdjust="spacingAndGlyphs">0,4510</text>
<text x="1761.6" y="1363.1" font-size="26" fill="#f2f2f2" textLength="103.7" lengthAdjust="spacingAndGlyphs">0,4922</text>
<text x="1924.4" y="1363.1" font-size="26" fill="#f2f2f2" textLength="103.7" lengthAdjust="spacingAndGlyphs">0,5359</text>
<text x="992.5" y="1406.6" font-size="26.5" fill="#f2f2f2" font-weight="bold" textLength="142" lengthAdjust="spacingAndGlyphs">Target Y</text>
<text x="1272.6" y="1406.6" font-size="26" fill="#f2f2f2" textLength="141.5" lengthAdjust="spacingAndGlyphs">247,5362</text>
<text x="1435.5" y="1406.6" font-size="26" fill="#f2f2f2" textLength="141.5" lengthAdjust="spacingAndGlyphs">243,1271</text>
<text x="1598.5" y="1406.6" font-size="26" fill="#f2f2f2" textLength="141.5" lengthAdjust="spacingAndGlyphs">239,4470</text>
<text x="1761.6" y="1406.6" font-size="26" fill="#f2f2f2" textLength="141.5" lengthAdjust="spacingAndGlyphs">236,4122</text>
<text x="1924.4" y="1406.6" font-size="26" fill="#f2f2f2" textLength="141.5" lengthAdjust="spacingAndGlyphs">233,7665</text>
<rect x="0" y="1525" width="2560" height="103" fill="url(#botbar)"/>
<rect x="1.5" y="1526" width="73.5" height="102" rx="5" fill="url(#pbtn)"/>
<circle cx="38.4" cy="1541" r="12" fill="url(#cgrad)"/>
<path d="M32 1544 L38.4 1538 L44.8 1544 Z" fill="#222"/>
<rect x="11" y="1569.6" width="56" height="47.3" rx="4" fill="#ffff00" stroke="#6a6a00" stroke-width="1"/>
<rect x="85" y="1526" width="246" height="102" rx="5" fill="url(#pbtn)"/>
<rect x="94.6" y="1535" width="226.8" height="58.5" rx="5" fill="#c2c5a2" stroke="#8a8a70" stroke-width="1"/>
<text x="208.0" y="1619.0" font-size="18.5" fill="#2e2e2e" text-anchor="middle" font-weight="bold">20%</text>
<rect x="334" y="1526" width="246" height="102" rx="5" fill="url(#pbtn)"/>
<rect x="343.6" y="1535" width="226.8" height="58.5" rx="5" fill="#c2c486" stroke="#8a8a70" stroke-width="1"/>
<text x="457.0" y="1619.0" font-size="18.5" fill="#2e2e2e" text-anchor="middle" font-weight="bold">40%</text>
<rect x="584" y="1526" width="246" height="102" rx="5" fill="url(#pbtn)"/>
<rect x="593.6" y="1535" width="226.8" height="58.5" rx="5" fill="#c2c466" stroke="#8a8a70" stroke-width="1"/>
<text x="707.0" y="1619.0" font-size="18.5" fill="#2e2e2e" text-anchor="middle" font-weight="bold">60%</text>
<rect x="833.6" y="1526" width="245.9999999999999" height="102" rx="5" fill="url(#pbtn)"/>
<rect x="843.2" y="1535" width="226.8" height="58.5" rx="5" fill="#c2c44e" stroke="#8a8a70" stroke-width="1"/>
<text x="956.6" y="1619.0" font-size="18.5" fill="#2e2e2e" text-anchor="middle" font-weight="bold">80%</text>
<rect x="1082.4" y="1525" width="244.5999999999999" height="103" rx="5" fill="#262626"/>
<rect x="1092.0" y="1535" width="225.4" height="58.5" rx="5" fill="#c8c800" stroke="#8a8a00" stroke-width="1"/>
<text x="1204.7" y="1619.0" font-size="18.5" fill="#ffffff" text-anchor="middle" font-weight="bold">100%</text>
<rect x="2030" y="1526" width="78.6" height="102" rx="5" fill="url(#cbtn)"/>
<path d="M2030 1556.4 H2108.6" stroke="#3a3a3a" stroke-width="1.5"/>
<circle cx="2069.3" cy="1540.3" r="12.5" fill="url(#cgrad)"/>
<path d="M2061.5 1544.5 L2069.3 1537 L2077.1 1544.5 Z" fill="#1a1a1a"/>
<rect x="2044.5" y="1567" width="49" height="48" rx="6" fill="#a0a0a0" stroke="#222" stroke-width="3.2"/>
<rect x="2058" y="1580.6" width="22.5" height="22.4" fill="#000"/>
<rect x="2109.7" y="1526" width="75.5" height="49.7" fill="url(#cbtn)"/>
<path d="M2185.8 1526 V1575.7" stroke="#2a2a2a" stroke-width="1.3"/>
<circle cx="2148.1" cy="1551" r="15.7" fill="url(#cgrad)"/>
<rect x="2186.4" y="1526" width="72.8" height="49.7" fill="url(#cbtn)"/>
<path d="M2259.8 1526 V1575.7" stroke="#2a2a2a" stroke-width="1.3"/>
<circle cx="2223.4" cy="1551" r="15.7" fill="url(#cgrad)"/>
<rect x="2260.4" y="1526" width="72.4" height="49.7" fill="url(#cbtn)"/>
<path d="M2333.4 1526 V1575.7" stroke="#2a2a2a" stroke-width="1.3"/>
<circle cx="2297.2" cy="1551" r="15.7" fill="url(#cgrad)"/>
<rect x="2334" y="1526" width="72.8" height="49.7" fill="url(#cbtn)"/>
<path d="M2407.4 1526 V1575.7" stroke="#2a2a2a" stroke-width="1.3"/>
<circle cx="2371.0" cy="1551" r="15.7" fill="url(#cgrad)"/>
<rect x="2408" y="1526" width="72.1" height="49.7" fill="url(#cbtn)"/>
<path d="M2480.7 1526 V1575.7" stroke="#2a2a2a" stroke-width="1.3"/>
<circle cx="2444.7" cy="1551" r="15.7" fill="url(#cgrad)"/>
<rect x="2141.5" y="1544.3" width="13" height="13" fill="#222"/>
<path d="M2218 1542 L2230.5 1551.5 L2218 1561 Z" fill="#222"/>
<path d="M2292.5 1541.5 H2289.5 V1561 H2292.5 M2301.5 1541.5 H2304.5 V1561 H2301.5" fill="none" stroke="#222" stroke-width="2.4"/>
<circle cx="2295" cy="1551" r="1.4" fill="#222"/><circle cx="2299" cy="1551" r="1.4" fill="#222"/>
<path d="M2371 1551 C2367 1546 2362 1546 2362 1551 C2362 1556 2367 1556 2371 1551 C2375 1546 2380 1546 2380 1551 C2380 1556 2375 1556 2371 1551 Z" fill="none" stroke="#222" stroke-width="2.6"/>
<path d="M2437.5 1553 A8 8 0 0 1 2451 1545 M2452.5 1549 A8 8 0 0 1 2439 1557" fill="none" stroke="#222" stroke-width="3"/>
<path d="M2448 1541.5 L2454 1545 L2448.5 1549.5 Z M2442 1552.5 L2436 1556 L2441.5 1560.5 Z" fill="#222"/>
<rect x="2481.3" y="1526" width="78.7" height="49.7" fill="#333"/>
<circle cx="2520" cy="1551" r="16" fill="#2c2c2c"/>
<rect x="2109.7" y="1576.8" width="223.6" height="51.2" rx="3" fill="url(#cbtn)"/>
<path d="M2334 1576.8 V1628" stroke="#2a2a2a" stroke-width="1.3"/>
<rect x="2334.6" y="1576.8" width="222" height="51.2" rx="3" fill="url(#cbtn)"/>
<circle cx="2161.3" cy="1602" r="15.7" fill="url(#cgrad)"/>
<circle cx="2511" cy="1602" r="15.7" fill="url(#cgrad)"/>
<path d="M2160 1596 L2154.5 1602 L2160 1608 M2167 1596 L2161.5 1602 L2167 1608" fill="none" stroke="#2a2a2a" stroke-width="2.3"/>
<path d="M2506 1596 L2511.5 1602 L2506 1608 M2513 1596 L2518.5 1602 L2513 1608" fill="none" stroke="#2a2a2a" stroke-width="2.3"/>
<text x="2205.0" y="1614.3" font-size="36" fill="#333333" font-weight="bold" textLength="83" lengthAdjust="spacingAndGlyphs">Back</text>
<text x="2380.0" y="1614.3" font-size="36" fill="#333333" font-weight="bold" textLength="85" lengthAdjust="spacingAndGlyphs">Next</text>
<rect x="2556" y="1526" width="4" height="102" fill="#3a3a3a"/>
<defs><linearGradient id="redge" x1="0" y1="0" x2="1" y2="0"><stop offset="0" stop-color="#333" stop-opacity="0"/><stop offset="1" stop-color="#111"/></linearGradient></defs>
<rect x="2554" y="145" width="6" height="1483" fill="url(#redge)"/>
<rect x="0" y="145" width="2" height="1483" fill="#262626"/>
</svg></body></html>
